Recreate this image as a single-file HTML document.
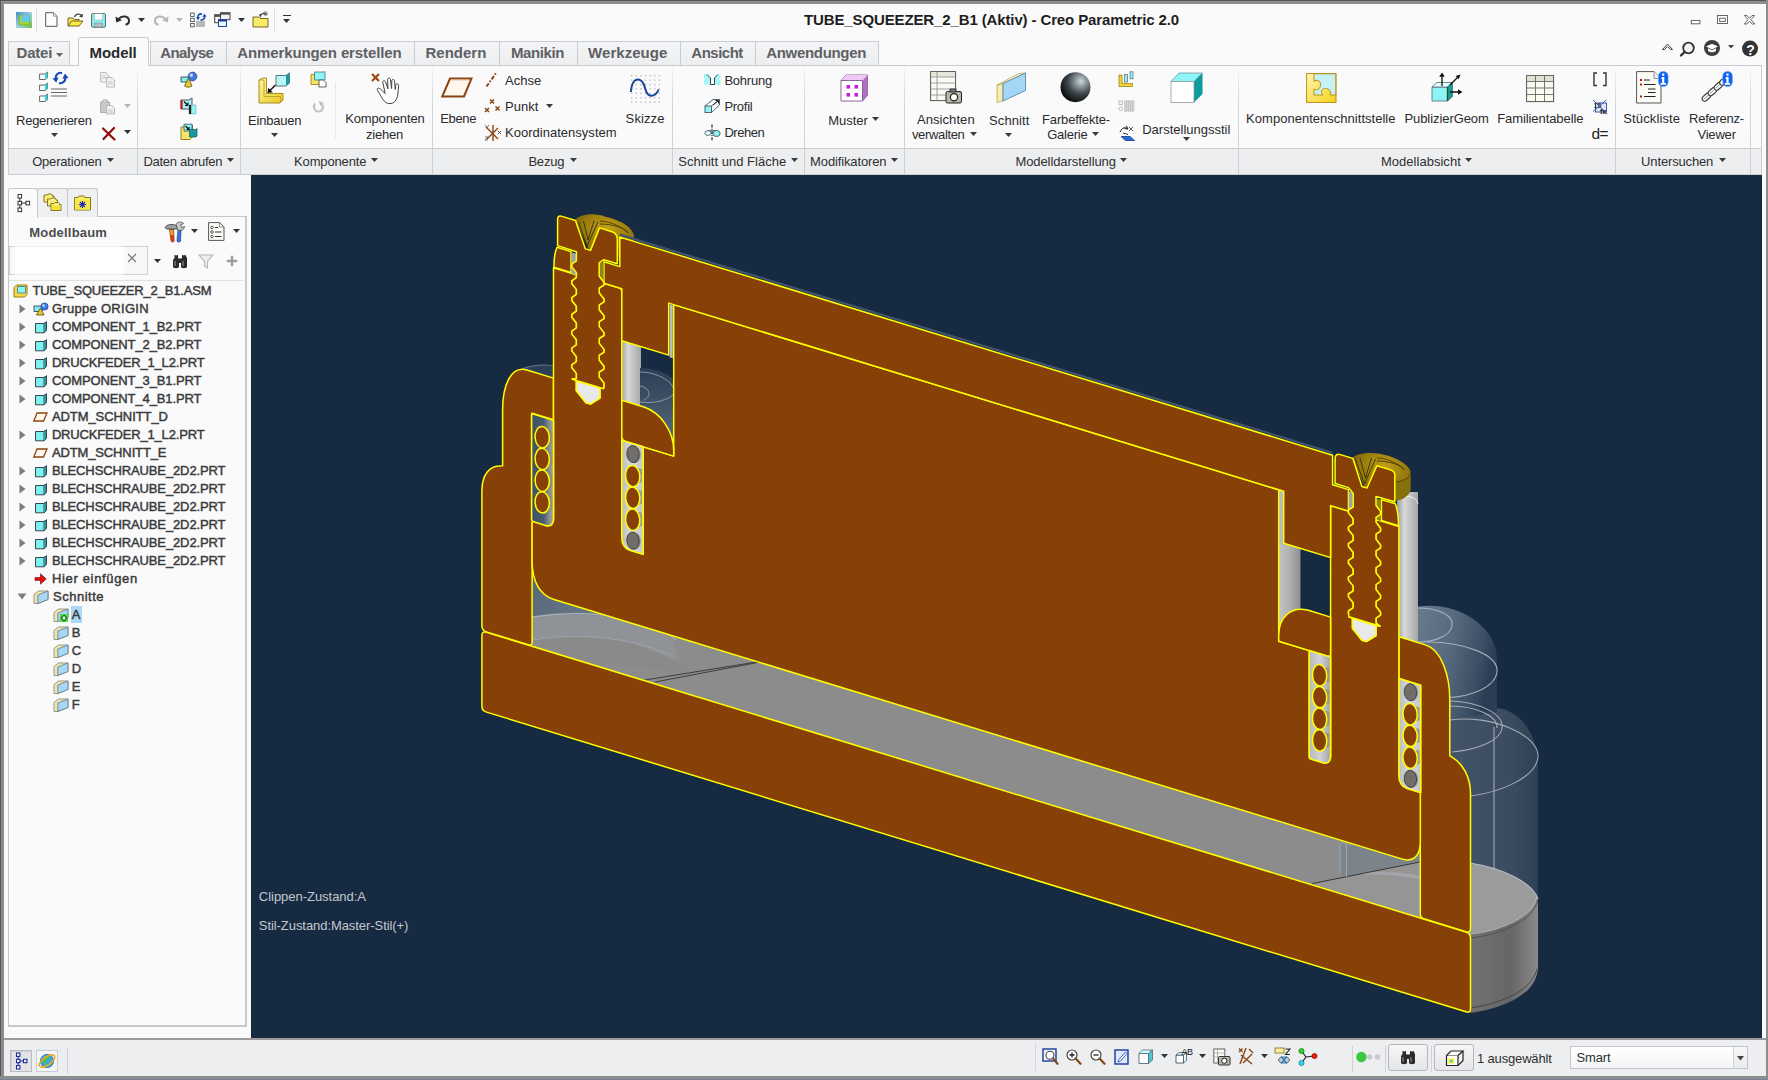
<!DOCTYPE html>
<html lang="de"><head><meta charset="utf-8"><title>TUBE_SQUEEZER_2_B1 (Aktiv) - Creo Parametric 2.0</title>
<style>
html,body{margin:0;padding:0;}
body{width:1768px;height:1080px;overflow:hidden;position:relative;background:#fafafb;font-family:"Liberation Sans",sans-serif;}
.t{position:absolute;white-space:nowrap;font-family:"Liberation Sans",sans-serif;}
svg{overflow:visible;}
.tr{-webkit-text-stroke:0.45px #3a3a3a;}
.g{-webkit-font-smoothing:antialiased;}
</style></head>
<body>
<div style="position:absolute;left:0px;top:0px;width:1768px;height:1080px;background:#8d8d8d;"></div>
<div style="position:absolute;left:0px;top:0px;width:1768px;height:1px;background:#555;"></div>
<div style="position:absolute;left:0px;top:0px;width:1px;height:1080px;background:#555;"></div>
<div style="position:absolute;left:4px;top:4px;width:1762px;height:1072px;background:#fafafb;"></div>
<div style="position:absolute;left:1766px;top:0px;width:2px;height:1080px;background:#8d8d8d;"></div>
<div style="position:absolute;left:0px;top:1076px;width:1768px;height:4px;background:#8d8d8d;"></div>
<div style="position:absolute;left:0px;top:1078.5px;width:1768px;height:1.5px;background:#76849a;"></div>
<div class="t " style="left:804.0px;top:11.8px;font-size:15px;line-height:15px;font-weight:bold;color:#1e1e1e;letter-spacing:-0.125px;">TUBE_SQUEEZER_2_B1 (Aktiv) - Creo Parametric 2.0</div>
<div style="position:absolute;left:8px;top:65px;width:1754px;height:1px;background:#c9ccd0;"></div>
<div style="position:absolute;left:8px;top:41px;width:62px;height:24px;background:linear-gradient(#f3f4f5,#eceef0);border:1px solid #c9ccd0;border-bottom:none;box-sizing:border-box;"></div>
<div class="t " style="left:16.5px;top:45.0px;font-size:15px;line-height:15px;font-weight:bold;color:#5e6064;letter-spacing:-0.197px;">Datei</div>
<svg style="position:absolute;left:54.5px;top:51.5px" width="9" height="6" viewBox="0 0 9 6" ><path d="M1 1 H8 L4.5 5 Z" fill="#666"/></svg>
<div style="position:absolute;left:150px;top:41px;width:77px;height:24px;background:linear-gradient(#f3f4f5,#eceef0);border:1px solid #c9ccd0;border-bottom:none;box-sizing:border-box;"></div>
<div class="t " style="left:160.3px;top:45.0px;font-size:15px;line-height:15px;font-weight:bold;color:#5e6064;letter-spacing:-0.650px;">Analyse</div>
<div style="position:absolute;left:226px;top:41px;width:189px;height:24px;background:linear-gradient(#f3f4f5,#eceef0);border:1px solid #c9ccd0;border-bottom:none;box-sizing:border-box;"></div>
<div class="t " style="left:237.2px;top:45.0px;font-size:15px;line-height:15px;font-weight:bold;color:#5e6064;letter-spacing:-0.110px;">Anmerkungen erstellen</div>
<div style="position:absolute;left:414px;top:41px;width:86px;height:24px;background:linear-gradient(#f3f4f5,#eceef0);border:1px solid #c9ccd0;border-bottom:none;box-sizing:border-box;"></div>
<div class="t " style="left:425.5px;top:45.0px;font-size:15px;line-height:15px;font-weight:bold;color:#5e6064;letter-spacing:-0.006px;">Rendern</div>
<div style="position:absolute;left:499px;top:41px;width:79px;height:24px;background:linear-gradient(#f3f4f5,#eceef0);border:1px solid #c9ccd0;border-bottom:none;box-sizing:border-box;"></div>
<div class="t " style="left:510.9px;top:45.0px;font-size:15px;line-height:15px;font-weight:bold;color:#5e6064;letter-spacing:-0.392px;">Manikin</div>
<div style="position:absolute;left:577px;top:41px;width:104px;height:24px;background:linear-gradient(#f3f4f5,#eceef0);border:1px solid #c9ccd0;border-bottom:none;box-sizing:border-box;"></div>
<div class="t " style="left:588.1px;top:45.0px;font-size:15px;line-height:15px;font-weight:bold;color:#5e6064;letter-spacing:0.031px;">Werkzeuge</div>
<div style="position:absolute;left:680px;top:41px;width:76px;height:24px;background:linear-gradient(#f3f4f5,#eceef0);border:1px solid #c9ccd0;border-bottom:none;box-sizing:border-box;"></div>
<div class="t " style="left:691.3px;top:45.0px;font-size:15px;line-height:15px;font-weight:bold;color:#5e6064;letter-spacing:-0.502px;">Ansicht</div>
<div style="position:absolute;left:755px;top:41px;width:124px;height:24px;background:linear-gradient(#f3f4f5,#eceef0);border:1px solid #c9ccd0;border-bottom:none;box-sizing:border-box;"></div>
<div class="t " style="left:766.2px;top:45.0px;font-size:15px;line-height:15px;font-weight:bold;color:#5e6064;letter-spacing:-0.312px;">Anwendungen</div>
<div style="position:absolute;left:78px;top:37px;width:71px;height:29px;background:#fafafb;border:1px solid #c9ccd0;border-bottom:none;border-radius:3px 3px 0 0;box-sizing:border-box;"></div>
<div class="t " style="left:89.6px;top:45.0px;font-size:15px;line-height:15px;font-weight:bold;color:#2a2a2a;letter-spacing:-0.067px;">Modell</div>
<div style="position:absolute;left:8px;top:66px;width:1754px;height:82px;background:#fafafb;border-left:1px solid #c9ccd0;border-right:1px solid #c9ccd0;box-sizing:border-box;"></div>
<div style="position:absolute;left:8px;top:148px;width:1754px;height:27px;background:#edeef0;border:1px solid #c9ccd0;box-sizing:border-box;"></div>
<div style="position:absolute;left:137px;top:68px;width:1px;height:106px;background:linear-gradient(#f3f4f5 0%,#d5d8db 30%,#c9ccd0 100%);"></div>
<div style="position:absolute;left:240px;top:68px;width:1px;height:106px;background:linear-gradient(#f3f4f5 0%,#d5d8db 30%,#c9ccd0 100%);"></div>
<div style="position:absolute;left:432px;top:68px;width:1px;height:106px;background:linear-gradient(#f3f4f5 0%,#d5d8db 30%,#c9ccd0 100%);"></div>
<div style="position:absolute;left:672px;top:68px;width:1px;height:106px;background:linear-gradient(#f3f4f5 0%,#d5d8db 30%,#c9ccd0 100%);"></div>
<div style="position:absolute;left:804px;top:68px;width:1px;height:106px;background:linear-gradient(#f3f4f5 0%,#d5d8db 30%,#c9ccd0 100%);"></div>
<div style="position:absolute;left:904px;top:68px;width:1px;height:106px;background:linear-gradient(#f3f4f5 0%,#d5d8db 30%,#c9ccd0 100%);"></div>
<div style="position:absolute;left:1238px;top:68px;width:1px;height:106px;background:linear-gradient(#f3f4f5 0%,#d5d8db 30%,#c9ccd0 100%);"></div>
<div style="position:absolute;left:1615px;top:68px;width:1px;height:106px;background:linear-gradient(#f3f4f5 0%,#d5d8db 30%,#c9ccd0 100%);"></div>
<div style="position:absolute;left:1750px;top:68px;width:1px;height:106px;background:linear-gradient(#f3f4f5 0%,#d5d8db 30%,#c9ccd0 100%);"></div>
<div style="position:absolute;left:335px;top:82px;width:1px;height:56px;background:#e6e7e9;"></div>
<div class="t " style="left:32.2px;top:155.0px;font-size:13px;line-height:13px;color:#2f2f2f;letter-spacing:-0.206px;">Operationen</div>
<svg style="position:absolute;left:105.5px;top:157.0px" width="9" height="6" viewBox="0 0 9 6" ><path d="M1 1 H8 L4.5 5 Z" fill="#3a3a3a"/></svg>
<div class="t " style="left:143.4px;top:155.0px;font-size:13px;line-height:13px;color:#2f2f2f;letter-spacing:-0.270px;">Daten abrufen</div>
<svg style="position:absolute;left:226.3px;top:157.0px" width="9" height="6" viewBox="0 0 9 6" ><path d="M1 1 H8 L4.5 5 Z" fill="#3a3a3a"/></svg>
<div class="t " style="left:294.0px;top:155.0px;font-size:13px;line-height:13px;color:#2f2f2f;letter-spacing:-0.133px;">Komponente</div>
<svg style="position:absolute;left:370.4px;top:157.0px" width="9" height="6" viewBox="0 0 9 6" ><path d="M1 1 H8 L4.5 5 Z" fill="#3a3a3a"/></svg>
<div class="t " style="left:528.4px;top:155.0px;font-size:13px;line-height:13px;color:#2f2f2f;letter-spacing:-0.195px;">Bezug</div>
<svg style="position:absolute;left:568.5px;top:157.0px" width="9" height="6" viewBox="0 0 9 6" ><path d="M1 1 H8 L4.5 5 Z" fill="#3a3a3a"/></svg>
<div class="t " style="left:678.2px;top:155.0px;font-size:13px;line-height:13px;color:#2f2f2f;letter-spacing:0.023px;">Schnitt und Fläche</div>
<svg style="position:absolute;left:790.3px;top:157.0px" width="9" height="6" viewBox="0 0 9 6" ><path d="M1 1 H8 L4.5 5 Z" fill="#3a3a3a"/></svg>
<div class="t " style="left:810.1px;top:155.0px;font-size:13px;line-height:13px;color:#2f2f2f;letter-spacing:-0.134px;">Modifikatoren</div>
<svg style="position:absolute;left:890.4px;top:157.0px" width="9" height="6" viewBox="0 0 9 6" ><path d="M1 1 H8 L4.5 5 Z" fill="#3a3a3a"/></svg>
<div class="t " style="left:1015.4px;top:155.0px;font-size:13px;line-height:13px;color:#2f2f2f;letter-spacing:-0.083px;">Modelldarstellung</div>
<svg style="position:absolute;left:1119.4px;top:157.0px" width="9" height="6" viewBox="0 0 9 6" ><path d="M1 1 H8 L4.5 5 Z" fill="#3a3a3a"/></svg>
<div class="t " style="left:1381.0px;top:155.0px;font-size:13px;line-height:13px;color:#2f2f2f;letter-spacing:0.023px;">Modellabsicht</div>
<svg style="position:absolute;left:1464.4px;top:157.0px" width="9" height="6" viewBox="0 0 9 6" ><path d="M1 1 H8 L4.5 5 Z" fill="#3a3a3a"/></svg>
<div class="t " style="left:1641.1px;top:155.0px;font-size:13px;line-height:13px;color:#2f2f2f;letter-spacing:-0.147px;">Untersuchen</div>
<svg style="position:absolute;left:1717.5px;top:157.0px" width="9" height="6" viewBox="0 0 9 6" ><path d="M1 1 H8 L4.5 5 Z" fill="#3a3a3a"/></svg>
<div class="t " style="left:16.1px;top:113.6px;font-size:13px;line-height:13px;color:#2b2b2b;letter-spacing:-0.273px;">Regenerieren</div>
<svg style="position:absolute;left:49.5px;top:131.7px" width="9" height="6" viewBox="0 0 9 6" ><path d="M1 1 H8 L4.5 5 Z" fill="#3a3a3a"/></svg>
<div class="t " style="left:248.1px;top:113.6px;font-size:13px;line-height:13px;color:#2b2b2b;letter-spacing:-0.207px;">Einbauen</div>
<svg style="position:absolute;left:270.3px;top:131.7px" width="9" height="6" viewBox="0 0 9 6" ><path d="M1 1 H8 L4.5 5 Z" fill="#3a3a3a"/></svg>
<div class="t " style="left:345.2px;top:111.9px;font-size:13px;line-height:13px;color:#2b2b2b;letter-spacing:-0.141px;">Komponenten</div>
<div class="t " style="left:365.9px;top:127.5px;font-size:13px;line-height:13px;color:#2b2b2b;letter-spacing:-0.169px;">ziehen</div>
<div class="t " style="left:440.2px;top:111.9px;font-size:13px;line-height:13px;color:#2b2b2b;letter-spacing:-0.319px;">Ebene</div>
<div class="t " style="left:505.1px;top:73.7px;font-size:13px;line-height:13px;color:#2b2b2b;letter-spacing:0.032px;">Achse</div>
<div class="t " style="left:505.1px;top:100.0px;font-size:13px;line-height:13px;color:#2b2b2b;letter-spacing:0.030px;">Punkt</div>
<svg style="position:absolute;left:545.4px;top:102.5px" width="9" height="6" viewBox="0 0 9 6" ><path d="M1 1 H8 L4.5 5 Z" fill="#3a3a3a"/></svg>
<div class="t " style="left:505.1px;top:126.3px;font-size:13px;line-height:13px;color:#2b2b2b;letter-spacing:0.013px;">Koordinatensystem</div>
<div class="t " style="left:625.6px;top:111.9px;font-size:13px;line-height:13px;color:#2b2b2b;letter-spacing:0.117px;">Skizze</div>
<div class="t " style="left:724.4px;top:73.7px;font-size:13px;line-height:13px;color:#2b2b2b;letter-spacing:-0.237px;">Bohrung</div>
<div class="t " style="left:724.4px;top:99.7px;font-size:13px;line-height:13px;color:#2b2b2b;letter-spacing:-0.271px;">Profil</div>
<div class="t " style="left:724.4px;top:126.3px;font-size:13px;line-height:13px;color:#2b2b2b;letter-spacing:-0.473px;">Drehen</div>
<div class="t " style="left:828.2px;top:113.6px;font-size:13px;line-height:13px;color:#2b2b2b;letter-spacing:-0.022px;">Muster</div>
<svg style="position:absolute;left:871.4px;top:115.9px" width="9" height="6" viewBox="0 0 9 6" ><path d="M1 1 H8 L4.5 5 Z" fill="#3a3a3a"/></svg>
<div class="t " style="left:917.0px;top:112.7px;font-size:13px;line-height:13px;color:#2b2b2b;letter-spacing:0.067px;">Ansichten</div>
<div class="t " style="left:911.9px;top:128.0px;font-size:13px;line-height:13px;color:#2b2b2b;letter-spacing:-0.338px;">verwalten</div>
<svg style="position:absolute;left:968.5px;top:130.8px" width="9" height="6" viewBox="0 0 9 6" ><path d="M1 1 H8 L4.5 5 Z" fill="#3a3a3a"/></svg>
<div class="t " style="left:989.1px;top:113.6px;font-size:13px;line-height:13px;color:#2b2b2b;letter-spacing:0.093px;">Schnitt</div>
<svg style="position:absolute;left:1004.4px;top:131.7px" width="9" height="6" viewBox="0 0 9 6" ><path d="M1 1 H8 L4.5 5 Z" fill="#3a3a3a"/></svg>
<div class="t " style="left:1042.1px;top:112.7px;font-size:13px;line-height:13px;color:#2b2b2b;letter-spacing:-0.172px;">Farbeffekte-</div>
<div class="t " style="left:1047.2px;top:128.0px;font-size:13px;line-height:13px;color:#2b2b2b;letter-spacing:-0.232px;">Galerie</div>
<svg style="position:absolute;left:1091.4px;top:130.8px" width="9" height="6" viewBox="0 0 9 6" ><path d="M1 1 H8 L4.5 5 Z" fill="#3a3a3a"/></svg>
<div class="t " style="left:1142.2px;top:122.9px;font-size:13px;line-height:13px;color:#2b2b2b;letter-spacing:0.003px;">Darstellungsstil</div>
<svg style="position:absolute;left:1181.5px;top:136.4px" width="9" height="6" viewBox="0 0 9 6" ><path d="M1 1 H8 L4.5 5 Z" fill="#3a3a3a"/></svg>
<div class="t " style="left:1246.1px;top:111.9px;font-size:13px;line-height:13px;color:#2b2b2b;letter-spacing:0.022px;">Komponentenschnittstelle</div>
<div class="t " style="left:1404.4px;top:111.9px;font-size:13px;line-height:13px;color:#2b2b2b;letter-spacing:-0.067px;">PublizierGeom</div>
<div class="t " style="left:1497.2px;top:111.9px;font-size:13px;line-height:13px;color:#2b2b2b;letter-spacing:-0.082px;">Familientabelle</div>
<div class="t " style="left:1623.3px;top:111.9px;font-size:13px;line-height:13px;color:#2b2b2b;letter-spacing:0.116px;">Stückliste</div>
<div class="t " style="left:1689.1px;top:111.9px;font-size:13px;line-height:13px;color:#2b2b2b;letter-spacing:-0.275px;">Referenz-</div>
<div class="t " style="left:1697.4px;top:127.5px;font-size:13px;line-height:13px;color:#2b2b2b;letter-spacing:-0.186px;">Viewer</div>
<div style="position:absolute;left:251px;top:175px;width:1511px;height:863px;background:#162a42;"></div>
<div style="position:absolute;left:8px;top:216px;width:239px;height:811px;background:#fafafb;border:2px solid #c4c8cc;border-left-width:1px;border-top-width:1px;box-sizing:border-box;"></div>
<div style="position:absolute;left:8px;top:188px;width:30px;height:30px;background:#fafafb;border:1px solid #c4c8cc;border-bottom:none;border-radius:3px 3px 0 0;box-sizing:border-box;"></div>
<div style="position:absolute;left:37px;top:188px;width:31px;height:29px;background:#eef0f1;border:1px solid #c4c8cc;border-bottom:none;border-radius:3px 3px 0 0;box-sizing:border-box;"></div>
<div style="position:absolute;left:67px;top:188px;width:31px;height:29px;background:#eef0f1;border:1px solid #c4c8cc;border-bottom:none;border-radius:3px 3px 0 0;box-sizing:border-box;"></div>
<div style="position:absolute;left:9px;top:216px;width:28px;height:3px;background:#fafafb;"></div>
<div class="t " style="left:29.3px;top:226.0px;font-size:13px;line-height:13px;font-weight:bold;color:#4a4c50;letter-spacing:0.196px;">Modellbaum</div>
<div style="position:absolute;left:9px;top:246px;width:139px;height:29px;background:#f7f8f8;border:1px solid #cdd0d3;box-sizing:border-box;"></div>
<div style="position:absolute;left:16px;top:248px;width:106px;height:25px;background:#fff;box-shadow:0 0 3px 2px #fff;"></div>
<div style="position:absolute;left:9px;top:279.5px;width:235px;height:1px;background:#dfe1e3;"></div>
<div style="position:absolute;left:4px;top:1038px;width:1762px;height:2px;background:#9a9a9a;"></div>
<div style="position:absolute;left:4px;top:1040px;width:1762px;height:36px;background:#edeeef;"></div>
<div style="position:absolute;left:1762px;top:175px;width:4px;height:863px;background:#fafafb;"></div>
<div style="position:absolute;left:10px;top:1050px;width:22px;height:22px;background:#e3e4e6;border:1px solid #b9bcc0;box-sizing:border-box;box-shadow:inset 1px 1px 1px #cfd1d4;"></div>
<div style="position:absolute;left:36px;top:1050px;width:22px;height:22px;background:#f4f5f6;border:1px solid #c9ccd0;box-sizing:border-box;"></div>
<div style="position:absolute;left:67px;top:1048px;width:1px;height:26px;background:#d0d2d5;"></div>
<div style="position:absolute;left:1035px;top:1043px;width:1px;height:28px;background:#d5d7da;"></div>
<div style="position:absolute;left:1352px;top:1046px;width:1px;height:26px;background:#d0d2d5;"></div>
<div style="position:absolute;left:1385px;top:1046px;width:1px;height:26px;background:#d0d2d5;"></div>
<div style="position:absolute;left:1431px;top:1046px;width:1px;height:26px;background:#d0d2d5;"></div>
<div style="position:absolute;left:1388px;top:1044px;width:40px;height:27px;background:linear-gradient(#f6f6f7,#e4e5e7);border:1px solid #b4b7bb;border-radius:3px;box-sizing:border-box;"></div>
<div style="position:absolute;left:1434px;top:1044px;width:40px;height:27px;background:linear-gradient(#f6f6f7,#e4e5e7);border:1px solid #b4b7bb;border-radius:3px;box-sizing:border-box;"></div>
<div class="t " style="left:1477.0px;top:1052.0px;font-size:13px;line-height:13px;color:#2f2f2f;letter-spacing:-0.160px;">1 ausgewählt</div>
<div style="position:absolute;left:1570px;top:1046px;width:178px;height:23px;background:linear-gradient(#fff,#f4f5f6);border:1px solid #c2c5c9;box-sizing:border-box;"></div>
<div style="position:absolute;left:1734px;top:1047px;width:13px;height:21px;background:linear-gradient(#f6f7f8,#e9ebed);"></div>
<div style="position:absolute;left:1733px;top:1047px;width:1px;height:21px;background:#cfd2d5;"></div>
<div class="t " style="left:1576.5px;top:1051.0px;font-size:13px;line-height:13px;color:#2f2f2f;letter-spacing:-0.134px;">Smart</div>
<svg style="position:absolute;left:1735.9px;top:1055.4px" width="9" height="6.4" viewBox="0 0 9 6.4" ><path d="M1 1 H8 L4.5 5.4 Z" fill="#444"/></svg>
<svg style="position:absolute;left:1354px;top:1050px" width="30" height="14" viewBox="0 0 30 14" ><circle cx="7.4" cy="7" r="5.2" fill="#3cc83c"/><circle cx="15.6" cy="7" r="2.8" fill="#c9cbce"/><circle cx="23.5" cy="7" r="2.8" fill="#c9cbce"/></svg>
<div class="t g" style="left:258.8px;top:890.0px;font-size:13px;line-height:13px;color:#c4c8cc;letter-spacing:-0.028px;">Clippen-Zustand:A</div>
<div class="t g" style="left:258.8px;top:919.0px;font-size:13px;line-height:13px;color:#c4c8cc;letter-spacing:-0.065px;">Stil-Zustand:Master-Stil(+)</div>
<svg style="position:absolute;left:16px;top:12px" width="16" height="16" viewBox="0 0 16 16" ><defs><linearGradient id="qa1" x1="0" y1="0" x2="1" y2="1"><stop offset="0" stop-color="#3c8fd8"/><stop offset="0.5" stop-color="#9fd0e8"/><stop offset="1" stop-color="#6cc04a"/></linearGradient></defs><rect x="0" y="0" width="16" height="16" fill="url(#qa1)"/><rect x="3" y="3" width="10.5" height="10" fill="#a6d52e" stroke="#6f9a1a" stroke-width="0.6"/><rect x="5.5" y="3" width="8" height="7" fill="#64c8ea"/></svg>
<div style="position:absolute;left:36px;top:8px;width:1px;height:24px;background:#dcdee0;"></div>
<svg style="position:absolute;left:45px;top:12px" width="13" height="15" viewBox="0 0 13 15" ><path d="M0.7 0.7 H8.5 L12 4.2 V14.3 H0.7 Z" fill="#fff" stroke="#555" stroke-width="1"/><path d="M8.5 0.7 V4.2 H12" fill="#e8e8e8" stroke="#777" stroke-width="0.7"/></svg>
<svg style="position:absolute;left:67px;top:12px" width="17" height="15" viewBox="0 0 17 15" ><path d="M1 14 L1 6 H6 L7.5 7.5 H12 V9" fill="#f7e46a" stroke="#6a5a10" stroke-width="0.9"/><path d="M1 14 L4.5 9 H16 L12 14 Z" fill="#fbe94c" stroke="#6a5a10" stroke-width="0.9"/><path d="M7.5 5 C8.5 1.5 13 1 14.8 4" fill="none" stroke="#333" stroke-width="1.2"/><path d="M15.8 1.8 L15.6 5.6 L12.2 4.6 Z" fill="#333"/></svg>
<svg style="position:absolute;left:91px;top:13px" width="15" height="15" viewBox="0 0 15 15" ><rect x="0.6" y="0.6" width="13.8" height="13.6" rx="1" fill="#8af3f5" stroke="#566" stroke-width="1"/><rect x="3.2" y="0.8" width="8.6" height="6.2" fill="#fff" stroke="#7aa" stroke-width="0.5"/><rect x="3.4" y="10" width="8" height="4" fill="#b9bcc0" stroke="#788" stroke-width="0.5"/></svg>
<svg style="position:absolute;left:115px;top:14px" width="17" height="12" viewBox="0 0 17 12" ><path d="M3.5 5.2 C7 0.8 13.5 2 14 6.5 C14.2 9 12.5 10.5 10.5 10.6" fill="none" stroke="#2e2e2e" stroke-width="2"/><path d="M0.5 2.5 L1.2 8.5 L7 6.3 Z" fill="#2e2e2e"/></svg>
<svg style="position:absolute;left:137.3px;top:16.5px" width="9" height="6" viewBox="0 0 9 6" ><path d="M1 1 H8 L4.5 5 Z" fill="#333"/></svg>
<svg style="position:absolute;left:152px;top:14px" width="17" height="12" viewBox="0 0 17 12" ><path d="M13.5 5.2 C10 0.8 3.5 2 3 6.5 C2.8 9 4.5 10.5 6.5 10.6" fill="none" stroke="#b4b6b9" stroke-width="2"/><path d="M16.5 2.5 L15.8 8.5 L10 6.3 Z" fill="#b4b6b9"/></svg>
<svg style="position:absolute;left:175.3px;top:16.5px" width="9" height="6" viewBox="0 0 9 6" ><path d="M1 1 H8 L4.5 5 Z" fill="#b4b6b9"/></svg>
<svg style="position:absolute;left:190px;top:12px" width="17" height="16" viewBox="0 0 17 16" ><g fill="#e8ffff" stroke="#444" stroke-width="0.8"><rect x="0.6" y="1" width="3.6" height="3.4"/><rect x="0.6" y="6.2" width="3.6" height="3.4"/><rect x="0.6" y="11.4" width="3.6" height="3.4"/></g><path d="M6 10 H15 M6 12 H15 M6 14 H15" stroke="#555" stroke-width="0.8"/><path d="M8 6.5 C7 3 10 1.2 12 2.2 M14.5 3.5 C15.5 7 12.5 8.5 10.5 7.8" fill="none" stroke="#1747b8" stroke-width="1.6"/><path d="M6 5.6 L8.2 8.2 L10 5 Z M16.4 4.6 L14.4 1.8 L12.4 5 Z" fill="#1747b8"/></svg>
<svg style="position:absolute;left:214px;top:12px" width="17" height="16" viewBox="0 0 17 16" ><rect x="0.7" y="2.7" width="9" height="8" fill="#f4f4f4" stroke="#444" stroke-width="1"/><rect x="0.7" y="2.7" width="9" height="2.2" fill="#555"/><rect x="6.5" y="0.7" width="9.5" height="7" fill="#f4f4f4" stroke="#444" stroke-width="1"/><rect x="6.5" y="0.7" width="9.5" height="2" fill="#555"/><rect x="4.5" y="7.5" width="8" height="7" fill="#dff" stroke="#2a3f9a" stroke-width="1"/><rect x="4.5" y="7.5" width="8" height="2" fill="#2a3f9a"/></svg>
<svg style="position:absolute;left:237.1px;top:16.5px" width="9" height="6" viewBox="0 0 9 6" ><path d="M1 1 H8 L4.5 5 Z" fill="#333"/></svg>
<svg style="position:absolute;left:252px;top:11px" width="18" height="17" viewBox="0 0 18 17" ><path d="M1 16 V6 H6.5 L8 7.5 H16 V16 Z" fill="#f8ec66" stroke="#6a5a10" stroke-width="0.9"/><path d="M8 5.5 C9 2 13 1.5 14.5 4" fill="none" stroke="#333" stroke-width="1.2"/><path d="M9.6 3 L7 3.4 L8.4 6.4 Z" fill="#333"/><path d="M12 1 h3 v3 h-3z" fill="none" stroke="#555" stroke-width="0.7"/></svg>
<div style="position:absolute;left:274px;top:8px;width:1px;height:24px;background:#dcdee0;"></div>
<div style="position:absolute;left:283px;top:15px;width:8px;height:1.3px;background:#333;"></div>
<svg style="position:absolute;left:282.3px;top:18.2px" width="9" height="6" viewBox="0 0 9 6" ><path d="M1 1 H8 L4.5 5 Z" fill="#333"/></svg>
<svg style="position:absolute;left:1690px;top:14px" width="68" height="12" viewBox="0 0 68 12" ><rect x="1.3" y="6.4" width="8.6" height="3.4" fill="#fff" stroke="#555" stroke-width="0.9"/><rect x="27.5" y="1.5" width="10" height="8" fill="#fff" stroke="#555" stroke-width="0.9"/><rect x="29.7" y="4.2" width="5.6" height="3.2" fill="#fff" stroke="#555" stroke-width="0.9"/><path d="M54.5 1.5 L57 1.5 L59.5 4.3 L62 1.5 L64.6 1.5 L61 5.7 L64.8 10 L62 10 L59.5 7.2 L57 10 L54.3 10 L58 5.7 Z" fill="#fff" stroke="#555" stroke-width="0.9"/></svg>
<svg style="position:absolute;left:1660px;top:39px" width="100" height="19" viewBox="0 0 100 19" ><path d="M2.5 10.5 L7.5 5 L12.5 10.5 L10.8 10.5 L7.5 7.6 L4.2 10.5 Z" fill="#fff" stroke="#444" stroke-width="1"/><circle cx="28.5" cy="9" r="5.3" fill="#eef6fb" stroke="#333" stroke-width="1.8"/><path d="M24.5 13 L21 16.5" stroke="#333" stroke-width="2.4" stroke-linecap="round"/><circle cx="52" cy="9" r="8" fill="#3c3c3c"/><path d="M46 7.5 L52 4.8 L58 7.5 L52 10.4 Z" fill="#fff"/><path d="M48 9.3 V12 C50 13.8 54 13.8 56 12 V9.3 L52 11.3 Z" fill="#fff"/><path d="M68 6 H74 L71 9.6 Z" fill="#444"/><circle cx="90" cy="9.6" r="8" fill="#333"/></svg>
<div class="t " style="left:1746.2px;top:43.1px;font-size:14px;line-height:14px;font-weight:bold;color:#fff;">?</div>
<svg style="position:absolute;left:39px;top:71px" width="30" height="32" viewBox="0 0 30 32" ><g fill="#f4ffff" stroke="#555" stroke-width="0.9"><path d="M0.6 3 H6 L8.5 1 V6.5 L6 8.5 H0.6 Z"/><path d="M0.6 14 H6 L8.5 12 V17.5 L6 19.5 H0.6 Z"/><path d="M0.6 25 H6 L8.5 23 V28.5 L6 30.5 H0.6 Z"/></g><g fill="#35d0d4"><path d="M6 3 L8.5 1 V6.5 L6 8.5Z"/><path d="M6 14 L8.5 12 V17.5 L6 19.5Z"/><path d="M6 25 L8.5 23 V28.5 L6 30.5Z"/></g><path d="M12 18 H28 M12 21.5 H28 M12 25 H28" stroke="#666" stroke-width="1"/><path d="M17 9 C15.5 4 19.5 0.8 23 2.2 M26 5.5 C27.5 10 23.5 13 20 12" fill="none" stroke="#1747b8" stroke-width="2"/><path d="M13.5 7.5 L17.2 11.5 L19.6 6.4 Z M29.6 7 L26 2.6 L23.4 7.8 Z" fill="#1747b8"/></svg>
<svg style="position:absolute;left:100px;top:72px" width="16" height="16" viewBox="0 0 16 16" ><g fill="#f2f2f2" stroke="#aeb1b5" stroke-width="0.9"><path d="M0.6 0.6 H6 L8.5 3 V10 H0.6 Z"/><path d="M6.6 5.6 H12 L14.5 8 V15 H6.6 Z"/></g><path d="M2 4 H6 M2 6 H7 M8 10 H13 M8 12 H13" stroke="#aeb1b5" stroke-width="0.7"/></svg>
<svg style="position:absolute;left:100px;top:99px" width="16" height="16" viewBox="0 0 16 16" ><path d="M0.6 3 H9.5 V13.5 H0.6 Z" fill="#c8cacc" stroke="#a2a5a9" stroke-width="0.9"/><path d="M3 3 V1 H7.2 V3" fill="#ddd" stroke="#a2a5a9" stroke-width="0.9"/><path d="M6.6 6.6 H12 L14.5 9 V15 H6.6 Z" fill="#f2f2f2" stroke="#aeb1b5" stroke-width="0.9"/><path d="M8 11 H13 M8 13 H13" stroke="#aeb1b5" stroke-width="0.7"/></svg>
<svg style="position:absolute;left:122.5px;top:102.5px" width="9" height="6" viewBox="0 0 9 6" ><path d="M1 1 H8 L4.5 5 Z" fill="#b4b6b9"/></svg>
<svg style="position:absolute;left:102px;top:127px" width="15" height="14" viewBox="0 0 15 14" ><path d="M1 1.5 L12.5 12.5 M12 1 L1.5 12" stroke="#8d0a0a" stroke-width="2.2" stroke-linecap="round"/></svg>
<svg style="position:absolute;left:122.5px;top:129.0px" width="9" height="6" viewBox="0 0 9 6" ><path d="M1 1 H8 L4.5 5 Z" fill="#333"/></svg>
<svg style="position:absolute;left:180px;top:71px" width="18" height="17" viewBox="0 0 18 17" ><path d="M1 6 H8 L10.5 3.8 V9 L8 11 H1 Z" fill="#7ff0f0" stroke="#3c4650" stroke-width="0.9"/><circle cx="12.5" cy="5.5" r="4.4" fill="#3e7be0" stroke="#1d3f94" stroke-width="0.7"/><circle cx="11.4" cy="4.2" r="1.6" fill="#cfe0ff"/><path d="M8.5 7 L12 15 C10 16.5 6.5 16.5 4.5 15 Z" fill="#e8c83a" stroke="#6a5a10" stroke-width="0.9"/></svg>
<svg style="position:absolute;left:180px;top:97px" width="18" height="18" viewBox="0 0 18 18" ><path d="M1 3 H9 L12 1 V10 L9 12 H1 Z" fill="#a8f4f4" stroke="#3c4650" stroke-width="0.9"/><rect x="0.6" y="3" width="2" height="9" fill="#d01010"/><path d="M9 8 H16 V17 H9 Z" fill="#8ff4f6" stroke="#7aa" stroke-width="0.6"/><rect x="9" y="8" width="2.2" height="9" fill="#222"/><path d="M4 4.5 L8 8.5 M8 8.5 V5.5 M8 8.5 H5" stroke="#111" stroke-width="1.2" fill="none"/></svg>
<svg style="position:absolute;left:180px;top:123px" width="18" height="18" viewBox="0 0 18 18" ><path d="M1 4 H10 L12.5 2 V14 L10 16.5 H1 Z" fill="#f6e56a" stroke="#8a7410" stroke-width="0.9"/><path d="M4 1.2 H12 V8 H4 Z" fill="#8ff4f6" stroke="#3c4650" stroke-width="0.8"/><path d="M9.5 6.5 H16 L17 5.5 V13 L16 14 H9.5 Z" fill="#1a9aa0" stroke="#0d5a60" stroke-width="0.7"/><path d="M5.5 3 L9 6.5 M9 6.5 V4 M9 6.5 H6.5" stroke="#111" stroke-width="1.2" fill="none"/></svg>
<svg style="position:absolute;left:258px;top:72px" width="33" height="33" viewBox="0 0 33 33" ><defs><linearGradient id="ein1" x1="0" y1="0" x2="1" y2="1"><stop offset="0" stop-color="#fff6a0"/><stop offset="1" stop-color="#e9c81e"/></linearGradient></defs><path d="M1 8 L4.5 6 H8.5 V21.5 H25 V28 L22 31 H1 Z" fill="url(#ein1)" stroke="#a08410" stroke-width="0.9"/><path d="M1 8 H6 V24.5 H22.5 V31" fill="none" stroke="#b89a18" stroke-width="0.8"/><path d="M18 3.5 H28 L31.5 0.8 V11 L28 14 H18 Z" fill="#b9f6f6" stroke="#4a6a70" stroke-width="0.9"/><path d="M28 3.5 L31.5 0.8 V11 L28 14 Z" fill="#1a9aa0"/><path d="M17.5 13 L10.5 20" stroke="#111" stroke-width="1.4"/><path d="M9.5 21 L10.2 15.8 L14.8 20.3 Z" fill="#111"/></svg>
<svg style="position:absolute;left:310px;top:71px" width="17" height="17" viewBox="0 0 17 17" ><path d="M1 3.5 H10 L12.5 1 V11 L10 13.5 H1 Z" fill="#f6e56a" stroke="#a08410" stroke-width="0.9"/><path d="M4.5 1 H13.5 L15 0.6 V9 H4.5 Z" fill="#8ff4f6" stroke="#3c7a80" stroke-width="0.8"/><path d="M9 9 H13.5 L16 11.5 V16 H9 Z" fill="#fff" stroke="#555" stroke-width="0.9"/></svg>
<svg style="position:absolute;left:312px;top:100px" width="13" height="13" viewBox="0 0 13 13" ><path d="M3.2 3.5 C0.5 6.5 2.5 11.5 6.5 11.5 C10.5 11.5 12.5 6.5 9.5 3.5" fill="none" stroke="#c2c4c7" stroke-width="2.2"/><path d="M6.8 0.5 L11.8 3 L8.2 6.2 Z" fill="#c2c4c7"/></svg>
<svg style="position:absolute;left:370px;top:72px" width="31" height="33" viewBox="0 0 31 33" ><path d="M2 2 L9 9 M9 2 L2 9" stroke="#9a4a12" stroke-width="2.2"/><path d="M10.5 17 C8.5 15.5 6.5 16 7.5 18.5 L13 27.5 C14.5 30 17 32 21 31.5 C25.5 31 27.5 26 28 21 L28.6 13.5 C28.7 11.5 26 11.2 25.8 13.2 L25.2 17.5 L24.6 9 C24.5 7 21.8 7 21.8 9 L21.6 16.5 L20.4 7.4 C20.2 5.4 17.5 5.8 17.6 7.8 L18 16.8 L15.4 9.6 C14.7 7.8 12.2 8.6 12.8 10.6 L15.2 21.5 Z" fill="#fff" stroke="#444" stroke-width="1"/></svg>
<svg style="position:absolute;left:441px;top:77px" width="32" height="21" viewBox="0 0 32 21" ><path d="M9 1.5 H30.5 L23 19.5 H1.2 Z" fill="#fff7ec" stroke="#8a4513" stroke-width="2"/><path d="M9.5 3 H28" stroke="#d8b890" stroke-width="0.8"/></svg>
<svg style="position:absolute;left:485px;top:71px" width="14" height="17" viewBox="0 0 14 17" ><path d="M1.5 15.5 L11.5 1.5" stroke="#8a4513" stroke-width="2" stroke-dasharray="4 1.6 1.6 1.6"/></svg>
<svg style="position:absolute;left:484px;top:98px" width="17" height="16" viewBox="0 0 17 16" ><g stroke="#8a4513" stroke-width="1.5"><path d="M6 1.5 L10 5.5 M10 1.5 L6 5.5"/><path d="M1 10 L5 14 M5 10 L1 14"/><path d="M11.5 8.5 L15.5 12.5 M15.5 8.5 L11.5 12.5"/></g></svg>
<svg style="position:absolute;left:484px;top:124px" width="18" height="18" viewBox="0 0 18 18" ><g stroke="#8a4513" stroke-width="1.4"><path d="M9 1 V17 M2 3 L14 15 M14 4 L3 15"/></g><path d="M14 7 L17 10 M17 7 L14 10" stroke="#555" stroke-width="1"/><path d="M1 1 L3 3.5 L5 1 M1 13 H4 L1 16 H4" stroke="#555" stroke-width="0.8" fill="none"/></svg>
<svg style="position:absolute;left:630px;top:74px" width="30" height="28" viewBox="0 0 30 28" ><g fill="#b9bec4"><rect x="1.0" y="1.0" width="1.4" height="1.4"/><rect x="1.0" y="5.4" width="1.4" height="1.4"/><rect x="1.0" y="9.8" width="1.4" height="1.4"/><rect x="1.0" y="14.2" width="1.4" height="1.4"/><rect x="1.0" y="18.6" width="1.4" height="1.4"/><rect x="1.0" y="23.0" width="1.4" height="1.4"/><rect x="1.0" y="27.4" width="1.4" height="1.4"/><rect x="5.6" y="1.0" width="1.4" height="1.4"/><rect x="5.6" y="5.4" width="1.4" height="1.4"/><rect x="5.6" y="9.8" width="1.4" height="1.4"/><rect x="5.6" y="14.2" width="1.4" height="1.4"/><rect x="5.6" y="18.6" width="1.4" height="1.4"/><rect x="5.6" y="23.0" width="1.4" height="1.4"/><rect x="5.6" y="27.4" width="1.4" height="1.4"/><rect x="10.2" y="1.0" width="1.4" height="1.4"/><rect x="10.2" y="5.4" width="1.4" height="1.4"/><rect x="10.2" y="9.8" width="1.4" height="1.4"/><rect x="10.2" y="14.2" width="1.4" height="1.4"/><rect x="10.2" y="18.6" width="1.4" height="1.4"/><rect x="10.2" y="23.0" width="1.4" height="1.4"/><rect x="10.2" y="27.4" width="1.4" height="1.4"/><rect x="14.8" y="1.0" width="1.4" height="1.4"/><rect x="14.8" y="5.4" width="1.4" height="1.4"/><rect x="14.8" y="9.8" width="1.4" height="1.4"/><rect x="14.8" y="14.2" width="1.4" height="1.4"/><rect x="14.8" y="18.6" width="1.4" height="1.4"/><rect x="14.8" y="23.0" width="1.4" height="1.4"/><rect x="14.8" y="27.4" width="1.4" height="1.4"/><rect x="19.4" y="1.0" width="1.4" height="1.4"/><rect x="19.4" y="5.4" width="1.4" height="1.4"/><rect x="19.4" y="9.8" width="1.4" height="1.4"/><rect x="19.4" y="14.2" width="1.4" height="1.4"/><rect x="19.4" y="18.6" width="1.4" height="1.4"/><rect x="19.4" y="23.0" width="1.4" height="1.4"/><rect x="19.4" y="27.4" width="1.4" height="1.4"/><rect x="24.0" y="1.0" width="1.4" height="1.4"/><rect x="24.0" y="5.4" width="1.4" height="1.4"/><rect x="24.0" y="9.8" width="1.4" height="1.4"/><rect x="24.0" y="14.2" width="1.4" height="1.4"/><rect x="24.0" y="18.6" width="1.4" height="1.4"/><rect x="24.0" y="23.0" width="1.4" height="1.4"/><rect x="24.0" y="27.4" width="1.4" height="1.4"/><rect x="28.6" y="1.0" width="1.4" height="1.4"/><rect x="28.6" y="5.4" width="1.4" height="1.4"/><rect x="28.6" y="9.8" width="1.4" height="1.4"/><rect x="28.6" y="14.2" width="1.4" height="1.4"/><rect x="28.6" y="18.6" width="1.4" height="1.4"/><rect x="28.6" y="23.0" width="1.4" height="1.4"/><rect x="28.6" y="27.4" width="1.4" height="1.4"/></g><path d="M0.8 18 C2 2 12 2 15 14 C18 26 26 22 28.6 15.5" fill="none" stroke="#16469a" stroke-width="2"/></svg>
<svg style="position:absolute;left:704px;top:72px" width="17" height="15" viewBox="0 0 17 15" ><rect x="0" y="2" width="16.5" height="11" fill="#9ff4f6"/><path d="M0 13 L4 9 M3 13 L8 8 M10 13 L16 7 M0 8 L5 3 M12 6 L16 2" stroke="#dff" stroke-width="1"/><path d="M3 2.5 L6.5 6 V12.5 H10.5 V6 L14 2.5" fill="#fff" stroke="#344" stroke-width="1"/></svg>
<svg style="position:absolute;left:704px;top:98px" width="17" height="16" viewBox="0 0 17 16" ><rect x="1" y="8" width="6.5" height="6.5" fill="#8ff4f6" stroke="#456" stroke-width="0.9"/><path d="M1 8 L9 1.5 H15.5 M7.5 8 L15.5 1.5 V7 L7.5 14.5" fill="none" stroke="#456" stroke-width="0.9"/><path d="M9 7 L14.5 2.5 M14.5 2.5 H11.5 M14.5 2.5 V5.5" stroke="#222" stroke-width="1" fill="none"/></svg>
<svg style="position:absolute;left:704px;top:124px" width="17" height="17" viewBox="0 0 17 17" ><ellipse cx="4" cy="9" rx="3.2" ry="2.4" fill="#dff" stroke="#567" stroke-width="0.9"/><ellipse cx="12.5" cy="9.5" rx="3.6" ry="3" fill="#8ff4f6" stroke="#456" stroke-width="0.9"/><path d="M8 0.5 V16.5" stroke="#111" stroke-width="1.1" stroke-dasharray="3 1.2 1 1.2"/><path d="M4 6.6 L12.5 6.5" stroke="#456" stroke-width="0.8"/></svg>
<svg style="position:absolute;left:840px;top:74px" width="29" height="28" viewBox="0 0 29 28" ><path d="M1 6.5 L6 1 H27.5 V21.5 L22.5 27 H1 Z" fill="#fff" stroke="#7a5a90" stroke-width="0.9"/><path d="M1 6.5 L6 1 H27.5 L22.5 6.5 Z" fill="#efc8f6"/><path d="M22.5 6.5 L27.5 1 V21.5 L22.5 27 Z" fill="#b070c4"/><path d="M1 6.5 H22.5 V27" fill="none" stroke="#7a5a90" stroke-width="0.9"/><g fill="#c020d8"><rect x="6.5" y="11" width="3.6" height="3.6"/><rect x="14.5" y="11" width="3.6" height="3.6"/><rect x="6.5" y="19" width="3.6" height="3.6"/><rect x="14.5" y="19" width="3.6" height="3.6"/></g></svg>
<svg style="position:absolute;left:930px;top:71px" width="33" height="34" viewBox="0 0 33 34" ><rect x="0.6" y="0.6" width="25" height="29" fill="#fbfbf6" stroke="#555" stroke-width="1"/><rect x="1" y="1" width="24" height="5" fill="#e6e6da"/><path d="M0.6 6 H25.6 M0.6 12 H25.6 M0.6 18 H25.6 M0.6 24 H25.6 M7 0.6 V29.6" stroke="#8a8a8a" stroke-width="0.8"/><rect x="16" y="20.5" width="15.5" height="11.5" rx="1.5" fill="#b9b7a8" stroke="#222" stroke-width="1"/><rect x="20" y="18" width="6" height="3" fill="#777" stroke="#222" stroke-width="0.8"/><circle cx="24" cy="26.3" r="3.6" fill="#fff" stroke="#222" stroke-width="1.2"/></svg>
<svg style="position:absolute;left:996px;top:72px" width="31" height="31" viewBox="0 0 31 31" ><path d="M1 13 L7 11.5 V29 L1 30.5 Z" fill="#f6ecae" stroke="#b9a860" stroke-width="0.8"/><path d="M1 13 L23 1.5 L29.5 1 L7 11.5 Z" fill="#fbf5c8" stroke="#b9a860" stroke-width="0.8"/><path d="M7 11.5 L29.5 1 V18.5 L7 29 Z" fill="#a6d6f6" stroke="#5a86a8" stroke-width="0.9"/></svg>
<svg style="position:absolute;left:1060px;top:72px" width="32" height="31" viewBox="0 0 32 31" ><defs><radialGradient id="sph" cx="0.68" cy="0.3" r="0.75"><stop offset="0" stop-color="#cfd8dc"/><stop offset="0.25" stop-color="#8a979c"/><stop offset="0.6" stop-color="#3a4145"/><stop offset="1" stop-color="#0c0c0c"/></radialGradient></defs><circle cx="15.5" cy="15.2" r="15" fill="url(#sph)"/></svg>
<svg style="position:absolute;left:1118px;top:71px" width="17" height="17" viewBox="0 0 17 17" ><path d="M1 4 H4 V12.5 H14.5 V15.5 H1 Z" fill="#f2d23a" stroke="#a08410" stroke-width="0.8"/><rect x="6.5" y="3.5" width="3" height="7.5" fill="#8ff4f6" stroke="#567" stroke-width="0.7"/><rect x="12" y="0.8" width="3" height="7" fill="#8ff4f6" stroke="#567" stroke-width="0.7"/></svg>
<svg style="position:absolute;left:1118px;top:100px" width="17" height="12" viewBox="0 0 17 12" ><g fill="none" stroke="#b4b6b9" stroke-width="0.9"><rect x="1" y="1" width="3.4" height="3.4"/><circle cx="2.7" cy="8.7" r="1.8"/></g><rect x="6.5" y="0.8" width="9.5" height="10.4" fill="#d6d7d9" stroke="#c2c4c7" stroke-width="0.7"/><path d="M8.5 1 V11 M10.5 1 V11 M12.5 1 V11 M14.5 1 V11" stroke="#bbbdc0" stroke-width="0.8"/></svg>
<svg style="position:absolute;left:1118px;top:124px" width="18" height="18" viewBox="0 0 18 18" ><path d="M3 12.5 H12 L16.5 16.5 H7.5 Z" fill="#2a6ad8" stroke="#123a8a" stroke-width="0.8"/><path d="M2 8 C4 3 8 3 10 5 M10 5 L6.5 4.6 M10 5 L8.4 1.8" stroke="#222" stroke-width="1" fill="none"/><path d="M11 3 L15 7 M15 3 L11 7" stroke="#444" stroke-width="0.9"/><path d="M5 9 L10 10.5" stroke="#222" stroke-width="0.9"/></svg>
<svg style="position:absolute;left:1170px;top:72px" width="34" height="32" viewBox="0 0 34 32" ><path d="M1 9.5 L9 1 H32.5 L24 9.5 Z" fill="#8ff6f8" stroke="#6a8a90" stroke-width="0.7"/><path d="M24 9.5 L32.5 1 V22 L24 30.5 Z" fill="#0f9a9e"/><rect x="1" y="9.5" width="23" height="21" fill="#fff" stroke="#8a9aa0" stroke-width="0.8"/></svg>
<svg style="position:absolute;left:1306px;top:73px" width="31" height="30" viewBox="0 0 31 30" ><defs><linearGradient id="pz" x1="0" y1="0" x2="1" y2="1"><stop offset="0" stop-color="#fdf6b0"/><stop offset="1" stop-color="#f5d31c"/></linearGradient></defs><rect x="0.6" y="0.6" width="29.4" height="28.8" fill="url(#pz)" stroke="#b8860b" stroke-width="0.9"/><path d="M8 0.8 H29.8 V22 H24 C26.5 17 21 15 18.5 15.5 C15 16 14.5 20 17 22 H8 V16 C12 18.5 15 14.5 14.5 11 C14 7.5 10.5 6 8 8.5 Z" fill="#c4f2f6" stroke="#b8860b" stroke-width="0.9"/></svg>
<svg style="position:absolute;left:1431px;top:72px" width="32" height="30" viewBox="0 0 32 30" ><path d="M1 15 H16.5 V29 H1 Z" fill="#8ff4f6" stroke="#567" stroke-width="0.8"/><path d="M1 15 L6 10.5 H21.5 L16.5 15 Z" fill="#e6ffff" stroke="#567" stroke-width="0.8"/><path d="M16.5 15 L21.5 10.5 V24.5 L16.5 29 Z" fill="#1a9aa0" stroke="#0d5a60" stroke-width="0.6"/><path d="M16.5 15 V29" stroke="#1a5a10" stroke-width="1.4"/><path d="M11 14 V3 M19 13 L27 5 M19 20 H29" stroke="#111" stroke-width="1.3"/><path d="M11 0.5 L13.8 4.8 H8.2 Z M29.5 2.5 L27.8 7.3 L24.6 4 Z M31.5 20 L27 22.8 V17.2 Z" fill="#111"/></svg>
<svg style="position:absolute;left:1526px;top:75px" width="28" height="27" viewBox="0 0 28 27" ><rect x="0.6" y="0.6" width="27" height="26" fill="#fbfbf0" stroke="#555" stroke-width="1"/><rect x="1" y="1" width="26" height="5" fill="#e2e2d4"/><path d="M0.6 6.5 H27.6 M0.6 13 H27.6 M0.6 19.5 H27.6 M9.5 0.6 V26.6 M18.5 0.6 V26.6" stroke="#666" stroke-width="0.9"/></svg>
<svg style="position:absolute;left:1592px;top:72px" width="16" height="15" viewBox="0 0 16 15" ><path d="M5 1 H2 V13.5 H5 M11 1 H14 V13.5 H11" fill="none" stroke="#333" stroke-width="1.4"/></svg>
<svg style="position:absolute;left:1592px;top:99px" width="16" height="16" viewBox="0 0 16 16" ><rect x="3.5" y="4" width="11" height="9" fill="#dfe8fb" stroke="#2a4aa8" stroke-width="0.9"/><path d="M1 1 L15.5 15 M1 12.5 L14.5 0.8" stroke="#2a4aa8" stroke-width="0.9"/></svg>
<div class="t " style="left:1593.6px;top:101.6px;font-size:7px;line-height:7px;color:#111;">15</div>
<div class="t " style="left:1600.0px;top:107.6px;font-size:7px;line-height:7px;font-weight:bold;color:#111;">fx</div>
<div class="t " style="left:1591.5px;top:125.9px;font-size:15.5px;line-height:15.5px;color:#222;letter-spacing:-0.594px;">d=</div>
<svg style="position:absolute;left:1636px;top:71px" width="35" height="34" viewBox="0 0 35 34" ><path d="M0.6 0.6 H18 L25 7.5 V32 H0.6 Z" fill="#fcfcf6" stroke="#555" stroke-width="1"/><path d="M18 0.6 V7.5 H25" fill="#eee" stroke="#777" stroke-width="0.8"/><g fill="#d01010"><rect x="4" y="8" width="2" height="2"/><rect x="4" y="12.5" width="2" height="2"/><rect x="4" y="24.5" width="2" height="2"/></g><path d="M8 9 H14 M8 13.5 H19.5 M12 18 H19.5 M12 21.5 H19.5 M8 25.5 H19.5" stroke="#222" stroke-width="1.2"/><rect x="22.5" y="0.5" width="9.6" height="15" rx="4.4" fill="#0a63ea" stroke="#6aa6ff" stroke-width="0.6"/><path d="M26.1 5.9 h2.2 v6 h1.6 v1.8 h-5.4 v-1.8 h1.6 v-4.2 h-1.4 z M26.1 2.5 h2.2 v2.2 h-2.2 z" fill="#fff"/></svg>
<svg style="position:absolute;left:1700px;top:71px" width="36" height="34" viewBox="0 0 36 34" ><g fill="#fff" stroke="#3a3a3a" stroke-width="1.2"><rect x="-5" y="-2.6" width="10" height="5.2" rx="2.6" transform="translate(6.5 26) rotate(-42)"/><rect x="-5" y="-2.6" width="10" height="5.2" rx="2.6" transform="translate(12.5 20.5) rotate(-42)"/><rect x="-5" y="-2.6" width="10" height="5.2" rx="2.6" transform="translate(18.5 15) rotate(-42)"/><rect x="-5" y="-2.6" width="10" height="5.2" rx="2.6" transform="translate(24 10) rotate(-42)"/></g><path d="M4 28 L9 23.5 M10 22.5 L15 18 M16 17 L21 12.5" stroke="#777" stroke-width="0.8"/><rect x="22.8" y="0.5" width="9.6" height="15" rx="4.4" fill="#0a63ea" stroke="#6aa6ff" stroke-width="0.6"/><path d="M26.400000000000002 5.9 h2.2 v6 h1.6 v1.8 h-5.4 v-1.8 h1.6 v-4.2 h-1.4 z M26.400000000000002 2.5 h2.2 v2.2 h-2.2 z" fill="#fff"/></svg>
<svg style="position:absolute;left:14px;top:193px" width="20" height="20" viewBox="0 0 20 20" ><g fill="#fff" stroke="#333" stroke-width="1"><rect x="4" y="1.5" width="3.6" height="3.6"/><rect x="4" y="8.3" width="3.6" height="3.6"/><rect x="4" y="15" width="3.6" height="3.6"/><rect x="12" y="8.3" width="3.6" height="3.6"/></g><path d="M5.8 5 V8.3 M5.8 12 V15 M7.6 10.1 H12" stroke="#333" stroke-width="1"/></svg>
<svg style="position:absolute;left:43px;top:193px" width="20" height="19" viewBox="0 0 20 19" ><g fill="#f8ee7a" stroke="#7a6a10" stroke-width="0.9"><path d="M1 9 V2 H4 L5 1 H8.5 L9.5 2 V3 H11 V9 Z"/><path d="M4.5 13 V6 H7.5 L8.5 5 H12 L13 6 V7 H14.5 V13 Z"/><path d="M8 17.5 V10.5 H11 L12 9.5 H15.5 L16.5 10.5 V11.5 H18 V17.5 Z"/></g><rect x="8.6" y="12.6" width="8.8" height="4.4" fill="#f5e23c"/></svg>
<svg style="position:absolute;left:74px;top:195px" width="18" height="16" viewBox="0 0 18 16" ><path d="M0.6 15 V2.5 H4 L5 1 H10 L11 2.5 H16.5 V15 Z" fill="#f8ee6a" stroke="#7a6a10" stroke-width="0.9"/><rect x="1.2" y="4.5" width="14.8" height="10" fill="#f7e84a"/><path d="M8.5 6 V13 M5 9.5 H12 M6 7 L11 12 M11 7 L6 12" stroke="#1a28c8" stroke-width="1.1"/></svg>
<svg style="position:absolute;left:164px;top:221px" width="22" height="22" viewBox="0 0 22 22" ><path d="M5.5 8 L7 20 C7.5 21.5 10 21.5 10.2 20 L9.5 8 Z" fill="#f0a030" stroke="#7a3a10" stroke-width="0.7"/><path d="M6.6 14 L7.2 20 C8 21 9.6 21 10 20 L9.8 14 Z" fill="#d83a1a"/><path d="M1 6.5 C3 3 9 2.5 13 5 L13.5 8 H2.5 Z" fill="#9aa0a6" stroke="#333" stroke-width="0.8"/><path d="M14 9 L13 20 C13.5 21.5 16 21.5 16.5 20 L17 9 Z" fill="#3a7ad8" stroke="#123a8a" stroke-width="0.7"/><path d="M12 3.5 C13 0.5 17.5 0.5 19.5 2.5 L16.5 4 L17.5 6.5 L20.5 5.5 C20.5 9 16 10.5 13.5 8.5 Z" fill="#c8ccd0" stroke="#444" stroke-width="0.8"/></svg>
<svg style="position:absolute;left:190.0px;top:228.0px" width="9" height="6" viewBox="0 0 9 6" ><path d="M1 1 H8 L4.5 5 Z" fill="#333"/></svg>
<svg style="position:absolute;left:208px;top:222px" width="17" height="19" viewBox="0 0 17 19" ><path d="M0.6 0.6 H11.5 L16 5 V18.4 H0.6 Z" fill="#fcfcf6" stroke="#555" stroke-width="1"/><path d="M11.5 0.6 V5 H16" fill="none" stroke="#777" stroke-width="0.8"/><g fill="none" stroke="#333" stroke-width="0.8"><circle cx="4" cy="5.5" r="1.3"/><circle cx="4" cy="10" r="1.3"/><circle cx="4" cy="14.5" r="1.3"/></g><path d="M7 5.5 H10 M7 10 H13.5 M7 14.5 H13.5" stroke="#333" stroke-width="1"/></svg>
<svg style="position:absolute;left:232.0px;top:228.0px" width="9" height="6" viewBox="0 0 9 6" ><path d="M1 1 H8 L4.5 5 Z" fill="#333"/></svg>
<svg style="position:absolute;left:127px;top:253px" width="10" height="10" viewBox="0 0 10 10" ><path d="M1 1 L9 9 M9 1 L1 9" stroke="#777" stroke-width="1.2"/></svg>
<svg style="position:absolute;left:153.1px;top:258.0px" width="9" height="6" viewBox="0 0 9 6" ><path d="M1 1 H8 L4.5 5 Z" fill="#333"/></svg>
<svg style="position:absolute;left:172px;top:253px" width="16" height="16" viewBox="0 0 16 16" ><g fill="#2a2a2a"><path d="M2.5 2 H6 V5 L7 6 V14 C7 15.5 1 15.5 1 14 V7 L2.5 5 Z"/><path d="M10 2 H13.5 L15 5 V7 L15 14 C15 15.5 9 15.5 9 14 V6 L10 5 Z"/><rect x="6.5" y="5.5" width="3" height="4.5"/></g><path d="M3 8 V13 M11 8 V13" stroke="#9a9a9a" stroke-width="1"/><path d="M3.4 2.6 H5.2 M10.8 2.6 H12.6" stroke="#999" stroke-width="0.8"/></svg>
<svg style="position:absolute;left:198px;top:254px" width="16" height="15" viewBox="0 0 16 15" ><path d="M1 1 H15 L9.5 7.5 V14 L6.5 12 V7.5 Z" fill="#eceded" stroke="#b4b6b9" stroke-width="1.1"/></svg>
<svg style="position:absolute;left:226px;top:255px" width="12" height="12" viewBox="0 0 12 12" ><path d="M6 0.8 V11.2 M0.8 6 H11.2" stroke="#9a9c9f" stroke-width="2.4"/></svg>
<svg style="position:absolute;left:13px;top:1052px" width="17" height="18" viewBox="0 0 17 18" ><g fill="#fff" stroke="#1a2a9a" stroke-width="1.1"><rect x="3.5" y="1" width="3.4" height="3.4"/><rect x="3.5" y="7.3" width="3.4" height="3.4"/><rect x="3.5" y="13.6" width="3.4" height="3.4"/><rect x="10.5" y="7.3" width="3.4" height="3.4"/></g><path d="M5.2 4.4 V7.3 M5.2 10.7 V13.6 M6.9 9 H10.5" stroke="#1a2a9a" stroke-width="1"/></svg>
<svg style="position:absolute;left:38px;top:1052px" width="18" height="18" viewBox="0 0 18 18" ><circle cx="9" cy="9" r="6.6" fill="#39a8e8" stroke="#1a6ab0" stroke-width="0.8"/><path d="M5 6 C7 3.5 11 4 12.5 6.5 C11 7.5 9 6.5 8 8.5 C7 10.5 9.5 11 8.5 13.5 C6 13 4 9.5 5 6 Z" fill="#4cc04a"/><ellipse cx="9" cy="9" rx="9" ry="4" fill="none" stroke="#f2a81a" stroke-width="1.6" transform="rotate(-35 9 9)"/></svg>
<svg style="position:absolute;left:1042px;top:1048px" width="18" height="18" viewBox="0 0 18 18" ><rect x="1" y="1" width="13" height="12" fill="#eef4ff" stroke="#1a3a9a" stroke-width="1.4"/><circle cx="8" cy="7.2" r="4" fill="#fff" stroke="#444" stroke-width="1.1"/><path d="M11 10.4 L15.5 15.8" stroke="#7a4a1a" stroke-width="2.2" stroke-linecap="round"/></svg>
<svg style="position:absolute;left:1065px;top:1048px" width="18" height="18" viewBox="0 0 18 18" ><circle cx="7" cy="7" r="5" fill="#fff" stroke="#444" stroke-width="1.2"/><path d="M4.5 7 H9.5 M7 4.5 V9.5" stroke="#222" stroke-width="1.3"/><path d="M10.6 10.6 L15.5 15.8" stroke="#7a4a1a" stroke-width="2.2" stroke-linecap="round"/></svg>
<svg style="position:absolute;left:1089px;top:1048px" width="18" height="18" viewBox="0 0 18 18" ><circle cx="7" cy="7" r="5" fill="#fff" stroke="#444" stroke-width="1.2"/><path d="M4.5 7 H9.5" stroke="#222" stroke-width="1.3"/><path d="M10.6 10.6 L15.5 15.8" stroke="#7a4a1a" stroke-width="2.2" stroke-linecap="round"/></svg>
<svg style="position:absolute;left:1114px;top:1049px" width="16" height="16" viewBox="0 0 16 16" ><rect x="1" y="1" width="13" height="14" fill="#dbe9ff" stroke="#1a3a9a" stroke-width="1.4"/><path d="M11.5 3 L5 10.5 L4 13 L6.5 12 L13 4.5 Z" fill="#fff" stroke="#1a3a9a" stroke-width="0.8"/></svg>
<svg style="position:absolute;left:1138px;top:1049px" width="16" height="16" viewBox="0 0 16 16" ><path d="M1 4.5 H10.5 V14.5 H1 Z" fill="#fff" stroke="#567" stroke-width="0.9"/><path d="M1 4.5 L4.5 1 H14.5 L10.5 4.5 Z" fill="#cff" stroke="#567" stroke-width="0.8"/><path d="M10.5 4.5 L14.5 1 V11 L10.5 14.5 Z" fill="#4cc8cc" stroke="#567" stroke-width="0.8"/></svg>
<svg style="position:absolute;left:1160.1px;top:1053.0px" width="9" height="6" viewBox="0 0 9 6" ><path d="M1 1 H8 L4.5 5 Z" fill="#333"/></svg>
<svg style="position:absolute;left:1175px;top:1047px" width="18" height="18" viewBox="0 0 18 18" ><path d="M1 8 H8.5 V16 H1 Z" fill="#fff" stroke="#456" stroke-width="0.9"/><path d="M1 8 L4 5.5 H11.5 L8.5 8 Z M8.5 8 L11.5 5.5 V13.5 L8.5 16 Z" fill="#dff" stroke="#456" stroke-width="0.8"/></svg>
<div class="t " style="left:1181.5px;top:1048.4px;font-size:9px;line-height:9px;color:#111;letter-spacing:-0.508px;">AB</div>
<svg style="position:absolute;left:1198.0px;top:1053.0px" width="9" height="6" viewBox="0 0 9 6" ><path d="M1 1 H8 L4.5 5 Z" fill="#333"/></svg>
<svg style="position:absolute;left:1213px;top:1048px" width="18" height="18" viewBox="0 0 18 18" ><rect x="0.8" y="1" width="11" height="14" fill="#fcfcf6" stroke="#555" stroke-width="0.9"/><path d="M0.8 5 H11.8 M0.8 9 H11.8 M4.5 1 V15" stroke="#999" stroke-width="0.7"/><rect x="5.5" y="8.5" width="11.5" height="8.5" rx="1" fill="#b9b7a8" stroke="#222" stroke-width="0.9"/><circle cx="11.3" cy="12.8" r="2.6" fill="#fff" stroke="#222" stroke-width="1"/></svg>
<svg style="position:absolute;left:1237px;top:1047px" width="18" height="19" viewBox="0 0 18 19" ><g stroke="#8a4513" stroke-width="1.4"><path d="M2 1.5 L5.5 5 M5.5 1.5 L2 5"/><path d="M9 1 L3 17 M4 8 L15 17 M15 7 L6 16"/></g><path d="M12 2 L16 6" stroke="#8a4513" stroke-width="1.2"/></svg>
<svg style="position:absolute;left:1260.2px;top:1053.0px" width="9" height="6" viewBox="0 0 9 6" ><path d="M1 1 H8 L4.5 5 Z" fill="#333"/></svg>
<svg style="position:absolute;left:1274px;top:1047px" width="18" height="19" viewBox="0 0 18 19" ><rect x="1" y="1" width="9" height="5" fill="#f8f0a0" stroke="#7a6a10" stroke-width="0.8"/><path d="M11.5 2 H16 L11.5 7.5 H16" fill="none" stroke="#222" stroke-width="1.1"/><ellipse cx="10" cy="13" rx="5.5" ry="3" fill="#cfd2d6" stroke="#444" stroke-width="0.8"/><path d="M7 9.5 L13 16.5 M13 9.5 L7 16.5" stroke="#1a7ac8" stroke-width="1.2"/></svg>
<svg style="position:absolute;left:1298px;top:1048px" width="20" height="18" viewBox="0 0 20 18" ><path d="M8 9 L3.5 3 M8 9 L3.5 15 M8 9 L16 8" stroke="#222" stroke-width="1.2"/><circle cx="3.5" cy="3" r="2.6" fill="#2ad02a" stroke="#0a6a0a" stroke-width="0.6"/><circle cx="3.5" cy="15" r="2.6" fill="#2ad8e8" stroke="#0a6a8a" stroke-width="0.6"/><circle cx="16.5" cy="8" r="2.6" fill="#e81a1a" stroke="#7a0a0a" stroke-width="0.6"/></svg>
<svg style="position:absolute;left:1400px;top:1049px" width="17" height="17" viewBox="0 0 17 17" ><g fill="#2a2a2a"><path d="M2.5 2 H6 V5 L7 6 V14 C7 15.5 1 15.5 1 14 V7 L2.5 5 Z"/><path d="M10 2 H13.5 L15 5 V7 L15 14 C15 15.5 9 15.5 9 14 V6 L10 5 Z"/><rect x="6.5" y="5.5" width="3" height="4.5"/></g><path d="M3 8 V13 M11 8 V13" stroke="#9a9a9a" stroke-width="1"/><path d="M3.4 2.6 H5.2 M10.8 2.6 H12.6" stroke="#999" stroke-width="0.8"/></svg>
<svg style="position:absolute;left:1445px;top:1049px" width="20" height="18" viewBox="0 0 20 18" ><path d="M1.5 6.5 H13 V16.5 H1.5 Z" fill="#fbfbfb" stroke="#222" stroke-width="1.2"/><path d="M1.5 6.5 L6 2 H18 L13 6.5 M18 2 V11.5 L13 16.5" fill="#fbfbfb" stroke="#222" stroke-width="1.2"/><rect x="3.5" y="9.5" width="5.5" height="5" fill="#f2ee1a"/><rect x="5" y="11" width="2.4" height="2.4" fill="#2ad8e8"/></svg>
<svg style="position:absolute;left:13px;top:283.5px" width="15" height="14" viewBox="0 0 15 14" ><path d="M1 3.5 L3.5 1 H14 V10.5 L11.5 13 H1 Z" fill="#f5d94a" stroke="#9a7a10" stroke-width="1"/><path d="M4.5 2.5 H12.5 V9 H4.5 Z" fill="#8ff4f4" stroke="#3c7a80" stroke-width="0.8"/></svg>
<div class="t tr" style="left:32.4px;top:283.7px;font-size:13px;line-height:13px;color:#3a3a3a;letter-spacing:-0.173px;">TUBE_SQUEEZER_2_B1.ASM</div>
<svg style="position:absolute;left:18.5px;top:303.5px" width="7" height="10" viewBox="0 0 7 10" ><path d="M0.5 0.5 V9.5 L6.5 5 Z" fill="#7d7d7d"/></svg>
<svg style="position:absolute;left:33px;top:301.5px" width="16" height="15" viewBox="0 0 16 15" ><path d="M1 4 H8 L10 2.5 V8 L8 9.5 H1 Z" fill="#7ff0f0" stroke="#3c4650" stroke-width="0.9"/><circle cx="11.5" cy="4.5" r="3.6" fill="#3e7be0" stroke="#1d3f94" stroke-width="0.7"/><circle cx="10.6" cy="3.6" r="1.3" fill="#bcd6ff"/><path d="M7.5 6 L11 13 H3.5 Z" fill="#e8c83a" stroke="#6a5a10" stroke-width="0.9"/></svg>
<div class="t tr" style="left:51.9px;top:301.7px;font-size:13px;line-height:13px;color:#3a3a3a;letter-spacing:0.292px;">Gruppe ORIGIN</div>
<svg style="position:absolute;left:18.5px;top:321.5px" width="7" height="10" viewBox="0 0 7 10" ><path d="M0.5 0.5 V9.5 L6.5 5 Z" fill="#7d7d7d"/></svg>
<svg style="position:absolute;left:33.8px;top:320.5px" width="14" height="13" viewBox="0 0 14 13" ><path d="M1.5 2.5 H10 L12.5 0.8 V9.5 L10 11.8 H1.5 Z" fill="#7ff0f0" stroke="#3c4650" stroke-width="1"/><path d="M10 2.5 V11.8 M10 2.5 L12.5 0.8" stroke="#3c4650" stroke-width="1" fill="none"/><path d="M10.5 2.6 L12 1.6 V9.3 L10.5 10.8 Z" fill="#1a9aa0"/></svg>
<div class="t tr" style="left:51.9px;top:319.7px;font-size:13px;line-height:13px;color:#3a3a3a;letter-spacing:-0.109px;">COMPONENT_1_B2.PRT</div>
<svg style="position:absolute;left:18.5px;top:339.5px" width="7" height="10" viewBox="0 0 7 10" ><path d="M0.5 0.5 V9.5 L6.5 5 Z" fill="#7d7d7d"/></svg>
<svg style="position:absolute;left:33.8px;top:338.5px" width="14" height="13" viewBox="0 0 14 13" ><path d="M1.5 2.5 H10 L12.5 0.8 V9.5 L10 11.8 H1.5 Z" fill="#7ff0f0" stroke="#3c4650" stroke-width="1"/><path d="M10 2.5 V11.8 M10 2.5 L12.5 0.8" stroke="#3c4650" stroke-width="1" fill="none"/><path d="M10.5 2.6 L12 1.6 V9.3 L10.5 10.8 Z" fill="#1a9aa0"/></svg>
<div class="t tr" style="left:51.9px;top:337.7px;font-size:13px;line-height:13px;color:#3a3a3a;letter-spacing:-0.109px;">COMPONENT_2_B2.PRT</div>
<svg style="position:absolute;left:18.5px;top:357.5px" width="7" height="10" viewBox="0 0 7 10" ><path d="M0.5 0.5 V9.5 L6.5 5 Z" fill="#7d7d7d"/></svg>
<svg style="position:absolute;left:33.8px;top:356.5px" width="14" height="13" viewBox="0 0 14 13" ><path d="M1.5 2.5 H10 L12.5 0.8 V9.5 L10 11.8 H1.5 Z" fill="#7ff0f0" stroke="#3c4650" stroke-width="1"/><path d="M10 2.5 V11.8 M10 2.5 L12.5 0.8" stroke="#3c4650" stroke-width="1" fill="none"/><path d="M10.5 2.6 L12 1.6 V9.3 L10.5 10.8 Z" fill="#1a9aa0"/></svg>
<div class="t tr" style="left:51.9px;top:355.7px;font-size:13px;line-height:13px;color:#3a3a3a;letter-spacing:-0.174px;">DRUCKFEDER_1_L2.PRT</div>
<svg style="position:absolute;left:18.5px;top:375.5px" width="7" height="10" viewBox="0 0 7 10" ><path d="M0.5 0.5 V9.5 L6.5 5 Z" fill="#7d7d7d"/></svg>
<svg style="position:absolute;left:33.8px;top:374.5px" width="14" height="13" viewBox="0 0 14 13" ><path d="M1.5 2.5 H10 L12.5 0.8 V9.5 L10 11.8 H1.5 Z" fill="#7ff0f0" stroke="#3c4650" stroke-width="1"/><path d="M10 2.5 V11.8 M10 2.5 L12.5 0.8" stroke="#3c4650" stroke-width="1" fill="none"/><path d="M10.5 2.6 L12 1.6 V9.3 L10.5 10.8 Z" fill="#1a9aa0"/></svg>
<div class="t tr" style="left:51.9px;top:373.7px;font-size:13px;line-height:13px;color:#3a3a3a;letter-spacing:-0.109px;">COMPONENT_3_B1.PRT</div>
<svg style="position:absolute;left:18.5px;top:393.5px" width="7" height="10" viewBox="0 0 7 10" ><path d="M0.5 0.5 V9.5 L6.5 5 Z" fill="#7d7d7d"/></svg>
<svg style="position:absolute;left:33.8px;top:392.5px" width="14" height="13" viewBox="0 0 14 13" ><path d="M1.5 2.5 H10 L12.5 0.8 V9.5 L10 11.8 H1.5 Z" fill="#7ff0f0" stroke="#3c4650" stroke-width="1"/><path d="M10 2.5 V11.8 M10 2.5 L12.5 0.8" stroke="#3c4650" stroke-width="1" fill="none"/><path d="M10.5 2.6 L12 1.6 V9.3 L10.5 10.8 Z" fill="#1a9aa0"/></svg>
<div class="t tr" style="left:51.9px;top:391.7px;font-size:13px;line-height:13px;color:#3a3a3a;letter-spacing:-0.109px;">COMPONENT_4_B1.PRT</div>
<svg style="position:absolute;left:33.3px;top:411.5px" width="15" height="10" viewBox="0 0 15 10" ><path d="M4 1 H14 L10.5 9 H0.8 Z" fill="#fff8f0" stroke="#8a4513" stroke-width="1.3"/></svg>
<div class="t tr" style="left:51.9px;top:409.7px;font-size:13px;line-height:13px;color:#3a3a3a;letter-spacing:-0.073px;">ADTM_SCHNITT_D</div>
<svg style="position:absolute;left:18.5px;top:429.5px" width="7" height="10" viewBox="0 0 7 10" ><path d="M0.5 0.5 V9.5 L6.5 5 Z" fill="#7d7d7d"/></svg>
<svg style="position:absolute;left:33.8px;top:428.5px" width="14" height="13" viewBox="0 0 14 13" ><path d="M1.5 2.5 H10 L12.5 0.8 V9.5 L10 11.8 H1.5 Z" fill="#7ff0f0" stroke="#3c4650" stroke-width="1"/><path d="M10 2.5 V11.8 M10 2.5 L12.5 0.8" stroke="#3c4650" stroke-width="1" fill="none"/><path d="M10.5 2.6 L12 1.6 V9.3 L10.5 10.8 Z" fill="#1a9aa0"/></svg>
<div class="t tr" style="left:51.9px;top:427.7px;font-size:13px;line-height:13px;color:#3a3a3a;letter-spacing:-0.174px;">DRUCKFEDER_1_L2.PRT</div>
<svg style="position:absolute;left:33.3px;top:447.5px" width="15" height="10" viewBox="0 0 15 10" ><path d="M4 1 H14 L10.5 9 H0.8 Z" fill="#fff8f0" stroke="#8a4513" stroke-width="1.3"/></svg>
<div class="t tr" style="left:51.9px;top:445.7px;font-size:13px;line-height:13px;color:#3a3a3a;letter-spacing:-0.128px;">ADTM_SCHNITT_E</div>
<svg style="position:absolute;left:18.5px;top:465.5px" width="7" height="10" viewBox="0 0 7 10" ><path d="M0.5 0.5 V9.5 L6.5 5 Z" fill="#7d7d7d"/></svg>
<svg style="position:absolute;left:33.8px;top:464.5px" width="14" height="13" viewBox="0 0 14 13" ><path d="M1.5 2.5 H10 L12.5 0.8 V9.5 L10 11.8 H1.5 Z" fill="#7ff0f0" stroke="#3c4650" stroke-width="1"/><path d="M10 2.5 V11.8 M10 2.5 L12.5 0.8" stroke="#3c4650" stroke-width="1" fill="none"/><path d="M10.5 2.6 L12 1.6 V9.3 L10.5 10.8 Z" fill="#1a9aa0"/></svg>
<div class="t tr" style="left:51.9px;top:463.7px;font-size:13px;line-height:13px;color:#3a3a3a;letter-spacing:-0.121px;">BLECHSCHRAUBE_2D2.PRT</div>
<svg style="position:absolute;left:18.5px;top:483.5px" width="7" height="10" viewBox="0 0 7 10" ><path d="M0.5 0.5 V9.5 L6.5 5 Z" fill="#7d7d7d"/></svg>
<svg style="position:absolute;left:33.8px;top:482.5px" width="14" height="13" viewBox="0 0 14 13" ><path d="M1.5 2.5 H10 L12.5 0.8 V9.5 L10 11.8 H1.5 Z" fill="#7ff0f0" stroke="#3c4650" stroke-width="1"/><path d="M10 2.5 V11.8 M10 2.5 L12.5 0.8" stroke="#3c4650" stroke-width="1" fill="none"/><path d="M10.5 2.6 L12 1.6 V9.3 L10.5 10.8 Z" fill="#1a9aa0"/></svg>
<div class="t tr" style="left:51.9px;top:481.7px;font-size:13px;line-height:13px;color:#3a3a3a;letter-spacing:-0.121px;">BLECHSCHRAUBE_2D2.PRT</div>
<svg style="position:absolute;left:18.5px;top:501.5px" width="7" height="10" viewBox="0 0 7 10" ><path d="M0.5 0.5 V9.5 L6.5 5 Z" fill="#7d7d7d"/></svg>
<svg style="position:absolute;left:33.8px;top:500.5px" width="14" height="13" viewBox="0 0 14 13" ><path d="M1.5 2.5 H10 L12.5 0.8 V9.5 L10 11.8 H1.5 Z" fill="#7ff0f0" stroke="#3c4650" stroke-width="1"/><path d="M10 2.5 V11.8 M10 2.5 L12.5 0.8" stroke="#3c4650" stroke-width="1" fill="none"/><path d="M10.5 2.6 L12 1.6 V9.3 L10.5 10.8 Z" fill="#1a9aa0"/></svg>
<div class="t tr" style="left:51.9px;top:499.7px;font-size:13px;line-height:13px;color:#3a3a3a;letter-spacing:-0.121px;">BLECHSCHRAUBE_2D2.PRT</div>
<svg style="position:absolute;left:18.5px;top:519.5px" width="7" height="10" viewBox="0 0 7 10" ><path d="M0.5 0.5 V9.5 L6.5 5 Z" fill="#7d7d7d"/></svg>
<svg style="position:absolute;left:33.8px;top:518.5px" width="14" height="13" viewBox="0 0 14 13" ><path d="M1.5 2.5 H10 L12.5 0.8 V9.5 L10 11.8 H1.5 Z" fill="#7ff0f0" stroke="#3c4650" stroke-width="1"/><path d="M10 2.5 V11.8 M10 2.5 L12.5 0.8" stroke="#3c4650" stroke-width="1" fill="none"/><path d="M10.5 2.6 L12 1.6 V9.3 L10.5 10.8 Z" fill="#1a9aa0"/></svg>
<div class="t tr" style="left:51.9px;top:517.7px;font-size:13px;line-height:13px;color:#3a3a3a;letter-spacing:-0.121px;">BLECHSCHRAUBE_2D2.PRT</div>
<svg style="position:absolute;left:18.5px;top:537.5px" width="7" height="10" viewBox="0 0 7 10" ><path d="M0.5 0.5 V9.5 L6.5 5 Z" fill="#7d7d7d"/></svg>
<svg style="position:absolute;left:33.8px;top:536.5px" width="14" height="13" viewBox="0 0 14 13" ><path d="M1.5 2.5 H10 L12.5 0.8 V9.5 L10 11.8 H1.5 Z" fill="#7ff0f0" stroke="#3c4650" stroke-width="1"/><path d="M10 2.5 V11.8 M10 2.5 L12.5 0.8" stroke="#3c4650" stroke-width="1" fill="none"/><path d="M10.5 2.6 L12 1.6 V9.3 L10.5 10.8 Z" fill="#1a9aa0"/></svg>
<div class="t tr" style="left:51.9px;top:535.7px;font-size:13px;line-height:13px;color:#3a3a3a;letter-spacing:-0.121px;">BLECHSCHRAUBE_2D2.PRT</div>
<svg style="position:absolute;left:18.5px;top:555.5px" width="7" height="10" viewBox="0 0 7 10" ><path d="M0.5 0.5 V9.5 L6.5 5 Z" fill="#7d7d7d"/></svg>
<svg style="position:absolute;left:33.8px;top:554.5px" width="14" height="13" viewBox="0 0 14 13" ><path d="M1.5 2.5 H10 L12.5 0.8 V9.5 L10 11.8 H1.5 Z" fill="#7ff0f0" stroke="#3c4650" stroke-width="1"/><path d="M10 2.5 V11.8 M10 2.5 L12.5 0.8" stroke="#3c4650" stroke-width="1" fill="none"/><path d="M10.5 2.6 L12 1.6 V9.3 L10.5 10.8 Z" fill="#1a9aa0"/></svg>
<div class="t tr" style="left:51.9px;top:553.7px;font-size:13px;line-height:13px;color:#3a3a3a;letter-spacing:-0.121px;">BLECHSCHRAUBE_2D2.PRT</div>
<svg style="position:absolute;left:34px;top:572.5px" width="13" height="12" viewBox="0 0 13 12" ><path d="M1 4.6 H6.5 V0.8 L12.2 6 L6.5 11.2 V7.4 H1 Z" fill="#e01010" stroke="#7a0000" stroke-width="0.6"/></svg>
<div class="t tr" style="left:51.9px;top:571.7px;font-size:13px;line-height:13px;color:#3a3a3a;letter-spacing:0.667px;">Hier einfügen</div>
<svg style="position:absolute;left:17px;top:593.0px" width="10" height="7" viewBox="0 0 10 7" ><path d="M0.5 0.5 H9.5 L5 6.5 Z" fill="#7d7d7d"/></svg>
<svg style="position:absolute;left:33px;top:589.5px" width="16" height="15" viewBox="0 0 16 15" ><path d="M1 4.5 L5.5 1 L15 1 L15 9.5 L5 13.5 H1 Z" fill="#f2e6a8" stroke="#8d8d84" stroke-width="0.9"/><path d="M4.8 5 L15 1 V9.5 L4.8 13.5 Z" fill="#a8d8f4" stroke="#6a8296" stroke-width="0.9"/></svg>
<div class="t tr" style="left:53.0px;top:589.7px;font-size:13px;line-height:13px;color:#3a3a3a;letter-spacing:0.502px;">Schnitte</div>
<div style="position:absolute;left:71px;top:606px;width:11px;height:17px;background:#a9d9f5;"></div>
<svg style="position:absolute;left:53px;top:607.5px" width="16" height="15" viewBox="0 0 16 15" ><path d="M1 4.5 L5.5 1 L15 1 L15 9.5 L5 13.5 H1 Z" fill="#f2e6a8" stroke="#8d8d84" stroke-width="0.9"/><path d="M4.8 5 L15 1 V9.5 L4.8 13.5 Z" fill="#a8d8f4" stroke="#6a8296" stroke-width="0.9"/><rect x="7" y="6" width="8" height="8" fill="#4be04b"/><path d="M11 7.2 L13.8 10 L11 12.8 L8.2 10 Z" fill="#eaffea" stroke="#0b5f0b" stroke-width="1.1"/></svg>
<div class="t tr" style="left:71.8px;top:607.7px;font-size:13px;line-height:13px;color:#3a3a3a;letter-spacing:0.328px;">A</div>
<svg style="position:absolute;left:53px;top:625.5px" width="16" height="15" viewBox="0 0 16 15" ><path d="M1 4.5 L5.5 1 L15 1 L15 9.5 L5 13.5 H1 Z" fill="#f2e6a8" stroke="#8d8d84" stroke-width="0.9"/><path d="M4.8 5 L15 1 V9.5 L4.8 13.5 Z" fill="#a8d8f4" stroke="#6a8296" stroke-width="0.9"/></svg>
<div class="t tr" style="left:71.8px;top:625.7px;font-size:13px;line-height:13px;color:#3a3a3a;letter-spacing:-0.172px;">B</div>
<svg style="position:absolute;left:53px;top:643.5px" width="16" height="15" viewBox="0 0 16 15" ><path d="M1 4.5 L5.5 1 L15 1 L15 9.5 L5 13.5 H1 Z" fill="#f2e6a8" stroke="#8d8d84" stroke-width="0.9"/><path d="M4.8 5 L15 1 V9.5 L4.8 13.5 Z" fill="#a8d8f4" stroke="#6a8296" stroke-width="0.9"/></svg>
<div class="t tr" style="left:71.8px;top:643.7px;font-size:13px;line-height:13px;color:#3a3a3a;letter-spacing:-0.891px;">C</div>
<svg style="position:absolute;left:53px;top:661.5px" width="16" height="15" viewBox="0 0 16 15" ><path d="M1 4.5 L5.5 1 L15 1 L15 9.5 L5 13.5 H1 Z" fill="#f2e6a8" stroke="#8d8d84" stroke-width="0.9"/><path d="M4.8 5 L15 1 V9.5 L4.8 13.5 Z" fill="#a8d8f4" stroke="#6a8296" stroke-width="0.9"/></svg>
<div class="t tr" style="left:71.8px;top:661.7px;font-size:13px;line-height:13px;color:#3a3a3a;letter-spacing:-0.391px;">D</div>
<svg style="position:absolute;left:53px;top:679.5px" width="16" height="15" viewBox="0 0 16 15" ><path d="M1 4.5 L5.5 1 L15 1 L15 9.5 L5 13.5 H1 Z" fill="#f2e6a8" stroke="#8d8d84" stroke-width="0.9"/><path d="M4.8 5 L15 1 V9.5 L4.8 13.5 Z" fill="#a8d8f4" stroke="#6a8296" stroke-width="0.9"/></svg>
<div class="t tr" style="left:71.8px;top:679.7px;font-size:13px;line-height:13px;color:#3a3a3a;letter-spacing:-0.672px;">E</div>
<svg style="position:absolute;left:53px;top:697.5px" width="16" height="15" viewBox="0 0 16 15" ><path d="M1 4.5 L5.5 1 L15 1 L15 9.5 L5 13.5 H1 Z" fill="#f2e6a8" stroke="#8d8d84" stroke-width="0.9"/><path d="M4.8 5 L15 1 V9.5 L4.8 13.5 Z" fill="#a8d8f4" stroke="#6a8296" stroke-width="0.9"/></svg>
<div class="t tr" style="left:71.8px;top:697.7px;font-size:13px;line-height:13px;color:#3a3a3a;letter-spacing:-0.453px;">F</div>
<svg style="position:absolute;left:251px;top:175px" width="1511" height="863" viewBox="251 175 1511 863" ><defs><linearGradient id="gh1" x1="0" x2="1" y1="0" y2="0.3"><stop offset="0" stop-color="#6a7b8e"/><stop offset="0.5" stop-color="#56687c"/><stop offset="0.85" stop-color="#3c4e63"/><stop offset="1" stop-color="#2a3d54"/></linearGradient><linearGradient id="gh2" x1="0" x2="1" y1="0" y2="0"><stop offset="0" stop-color="#46566a"/><stop offset="0.75" stop-color="#3a4b5f"/><stop offset="1" stop-color="#2e4056"/></linearGradient><linearGradient id="gcyl" x1="0" x2="1" y1="0" y2="0"><stop offset="0" stop-color="#9a9a9a"/><stop offset="0.35" stop-color="#d9d9d9"/><stop offset="1" stop-color="#a6a6a6"/></linearGradient><linearGradient id="gcyl2" x1="0" x2="1" y1="0" y2="0"><stop offset="0" stop-color="#c4c4c4"/><stop offset="0.5" stop-color="#b0b0b0"/><stop offset="1" stop-color="#8e8e8e"/></linearGradient><linearGradient id="gbase" x1="0" x2="1" y1="0" y2="0"><stop offset="0" stop-color="#727272"/><stop offset="0.6" stop-color="#666"/><stop offset="1" stop-color="#8a8a8a"/></linearGradient><linearGradient id="gchan" x1="0" x2="1" y1="0" y2="0"><stop offset="0" stop-color="#5d6b79"/><stop offset="1" stop-color="#8c8c8c"/></linearGradient><linearGradient id="gchan2" x1="0" x2="1" y1="0" y2="0.25"><stop offset="0" stop-color="#55667a"/><stop offset="0.5" stop-color="#6b7886"/><stop offset="1" stop-color="#8a8c8e"/></linearGradient><radialGradient id="ghead" cx="0.55" cy="0.3" r="0.7"><stop offset="0" stop-color="#c4a016"/><stop offset="0.6" stop-color="#94780c"/><stop offset="1" stop-color="#6a5606"/></radialGradient></defs><path d="M1470 932 L1470 1013 C1500 1009 1538 996 1538 966 L1538 890 Z" fill="url(#gbase)"/><path d="M1421 900 L1470 934 C1500 931 1538 916 1538 893 C1538 876 1510 860 1470 852 L1421 840 Z" fill="#9b9b9b"/><path d="M1470 938 C1500 935 1538 920 1538 896" fill="none" stroke="#4a4a4a" stroke-width="0.8"/><path d="M1470 934 C1500 931 1536 917 1537.5 893" fill="none" stroke="#b4b4b4" stroke-width="1"/><path d="M1470 1008 C1500 1004 1532 991 1537 969" fill="none" stroke="#3a3a3a" stroke-width="0.8"/><path d="M1440 700 L1497 708 C1520 710 1538 735 1538 764 L1538 899 C1532 882 1502 868 1470 863 L1440 850 Z" fill="url(#gh2)"/><path d="M1470 863 C1502 868 1532 882 1538 899" fill="none" stroke="#c2c8ce" stroke-width="1.2" opacity="0.85"/><path d="M1416 607 C1455 600 1497 625 1497 660 L1497 712 L1440 722 L1416 700 Z" fill="url(#gh1)"/><g fill="none" stroke="#b4bcc4" stroke-width="1.1" opacity="0.85"><path d="M1417 608 C1440 608 1454 616 1452 626 C1450 637 1432 642 1418 642"/><path d="M1427 642 C1465 642 1499 655 1497 672 C1495 688 1470 696 1450 697.5"/><path d="M1450 701 C1480 702 1504 714 1502 728 C1500 742 1474 750 1452 752"/><path d="M1450 706 C1476 706 1498 716 1497 728"/><path d="M1450 720 C1490 714 1540 735 1538 757 C1536 778 1500 792 1471 796"/><path d="M1494 727 V870"/></g><rect x="1397" y="492" width="21" height="150" fill="url(#gcyl)"/><path d="M1397 500 C1405 494 1417 496 1418 504" fill="none" stroke="#eee" stroke-width="1"/><rect x="621" y="335" width="20" height="70" fill="url(#gcyl)"/><rect x="1279" y="488" width="21.5" height="150" fill="url(#gcyl2)"/><defs><linearGradient id="gtl" x1="0" x2="0" y1="0" y2="1"><stop offset="0" stop-color="#2a3d54"/><stop offset="1" stop-color="#5d6e80"/></linearGradient></defs><path d="M640 368 C655 368 672 374 674 382 L674 450 L640 440 Z" fill="url(#gtl)"/><g fill="none" stroke="#aeb6be" stroke-width="0.9" opacity="0.8"><path d="M640 372 C655 372 672 380 674 390"/><path d="M640 386 C650 388 652 396 644 400"/><path d="M640 402 C655 404 668 400 674 394"/></g><path d="M522 368 C535 363 550 364 560 368 L560 385 L530 376 Z" fill="#3f5166" opacity="0.55"/><path d="M520 370 C532 364 550 364 560 367" fill="none" stroke="#8f9aa6" stroke-width="0.8" opacity="0.7"/><path d="M574 221 C578 214 596 212 606 217 C620 220 633 227 634 236 L634 250 L617 262 L590 252 L577 224 Z" fill="url(#ghead)"/><path d="M578.5 222 L587 246 L598 222 M583.5 221 L588 240 L594 221" fill="none" stroke="#2a2408" stroke-width="0.8"/><path d="M600 224 C612 224 626 228 628 233 C626 230 612 221 600 221" fill="none" stroke="#3a3008" stroke-width="0.8"/><path d="M1352 458 C1358 452 1376 452 1385 455 C1398 458 1410 466 1410.5 472 L1410.5 490 C1409 496 1402 500 1394 501 L1365 488 Z" fill="url(#ghead)"/><path d="M1394 482 C1400 482 1408 479 1410.5 475 L1410.5 490 C1409 496 1402 500 1394 501 Z" fill="#85700c"/><path d="M1394 482 C1400 482 1408 479 1410.5 475" fill="none" stroke="#4a3e08" stroke-width="0.8"/><path d="M1355 458.5 L1364.5 484 L1375.5 459 M1360 458 L1365.5 478 L1371.5 458" fill="none" stroke="#2a2408" stroke-width="0.8"/><path d="M1377 461 C1389 461 1402 465 1404 470 C1402 466 1389 458 1377 458" fill="none" stroke="#3a3008" stroke-width="0.8"/><path d="M619.8 234.6 L1332.6 452.7" stroke="#42536a" stroke-width="2.2" fill="none"/><path d="M532.1 555.3 L1420.3 827.1 L1420.3 919.1 L532.1 647.3 Z" fill="#8c8c8c"/><path d="M532 545 L720 602 L720 652 C680 625 620 614 532 618 Z" fill="url(#gchan2)"/><path d="M532 617 C570 612 640 612 672 640 L680 660 L532 640 Z" fill="#8f9296"/><path d="M532 640 C575 632 640 634 690 672 L560 660 Z" fill="#8a8a8a"/><path d="M532 617 C575 610 640 612 676 640" fill="none" stroke="#a7adb3" stroke-width="1.5"/><path d="M532 640 C575 633 630 636 670 655" fill="none" stroke="#9ea3a8" stroke-width="1.2"/><path d="M645 680 L800 655 M655 682 L760 662" stroke="#333" stroke-width="0.9" fill="none"/><path d="M1340 843 C1341 841 1345 842 1346.5 846 L1421 868 L1421 862 L1346.5 877 L1340 874 Z" fill="#7d858d"/><path d="M1346.5 846 L1421 835 L1421 862 L1346.5 877 Z" fill="#7b838b"/><path d="M1312.2 883.6 L1419.8 862 L1421 862 L1421 920 L1330 892 Z" fill="#959595"/><path d="M1363 874.5 C1385 874 1405 876 1421 879.5 L1421 876 C1405 872.5 1385 871 1366 872 Z" fill="#a2a6aa"/><path d="M1312.2 883.6 L1419.8 862" fill="none" stroke="#2c2c2c" stroke-width="0.9"/><path d="M1340 874 V846 C1340 842 1345 841 1346.5 846 V877" fill="none" stroke="#a9aeb3" stroke-width="0.8"/><path d="M486.4 632.3 L1466.0 932.0 Q1470.5 933.4 1470.5 937.9 L1470.5 1008.7 Q1470.5 1013.2 1466.0 1011.8 L486.4 712.1 Q481.9 710.7 481.9 706.2 L481.9 635.4 Q481.9 630.9 486.4 632.3 Z" fill="#874106" stroke="#ffff00" stroke-width="1.5" stroke-linejoin="round" /><path d="M502.6 410.2 C502.6 385.2 511.0 365.1 527.0 370.0 L553.5 378.1 L553.5 419.8 L532.1 413.3 L532.1 642.3 Q532.1 645.9 528.5 644.8 L486.4 631.9 Q481.9 630.5 481.9 626.0 L481.9 490.9 C481.9 473.9 490.0 466.4 499.0 466.1 L502.6 465.7 Z" fill="#874106" stroke="#ffff00" stroke-width="1.5" stroke-linejoin="round" /><path d="M1449.8 700.1 C1449.8 675.1 1441.4 649.8 1425.4 644.9 L1398.9 636.8 L1398.9 678.5 L1420.3 685.1 L1420.3 914.1 Q1420.3 917.7 1423.9 918.8 L1466.0 931.6 Q1470.5 933.0 1470.5 928.5 L1470.5 793.4 C1470.5 776.4 1462.4 763.9 1453.4 758.2 L1449.8 755.6 Z" fill="#874106" stroke="#ffff00" stroke-width="1.5" stroke-linejoin="round" /><path d="M673.7 304.6 L1278.7 489.7 L1278.7 641.2 L1309.2 650.6 L1309.2 758.1 L1323.4 762.4 Q1330.6 764.6 1330.6 756.6 L1330.6 508.6 Q1330.6 505.6 1333.4 506.5 L1348.5 511.1 L1348.5 512.9 L1353.2 518.7 L1353.2 520.7 L1353.2 523.8 L1348.5 526.8 L1348.5 529.7 L1353.2 535.5 L1353.2 537.5 L1353.2 540.5 L1348.5 543.6 L1348.5 546.5 L1353.2 552.3 L1353.2 554.3 L1353.2 557.4 L1348.5 560.4 L1348.5 563.3 L1353.2 569.1 L1353.2 571.1 L1353.2 574.2 L1348.5 577.2 L1348.5 580.1 L1353.2 585.9 L1353.2 587.9 L1353.2 591.0 L1348.5 594.0 L1348.5 596.9 L1353.2 602.7 L1353.2 604.7 L1353.2 607.8 L1348.5 610.8 L1348.5 613.7 L1348.9 616.7 L1352.4 618.3 L1352.4 628.3 L1361.9 640.2 L1366.4 641.6 L1376.1 635.5 L1376.1 625.5 L1380.1 626.3 L1376.0 623.1 L1376.0 620.1 L1376.0 618.1 L1380.5 615.1 L1380.5 612.2 L1376.0 606.3 L1376.0 603.3 L1376.0 601.3 L1380.5 598.3 L1380.5 595.4 L1376.0 589.5 L1376.0 586.5 L1376.0 584.5 L1380.5 581.5 L1380.5 578.6 L1376.0 572.7 L1376.0 569.7 L1376.0 567.7 L1380.5 564.7 L1380.5 561.8 L1376.0 555.9 L1376.0 552.9 L1376.0 550.9 L1380.5 547.9 L1380.5 545.0 L1376.0 539.1 L1376.0 536.1 L1376.0 534.1 L1380.5 531.1 L1380.5 528.2 L1376.0 522.3 L1376.0 519.5 L1398.9 526.5 L1398.9 777.5 Q1398.9 785.5 1406.4 787.8 L1420.3 792.1 L1420.3 842.1 C1420.3 857.1 1412.4 862.1 1402.4 859.1 L554.0 599.5 C540.0 595.2 532.1 581.3 532.1 561.3 L532.1 520.3 L546.0 524.5 Q553.5 526.8 553.5 518.8 L553.5 267.8 L576.4 274.8 L576.4 277.6 L571.9 280.8 L571.9 283.7 L576.4 289.4 L576.4 291.4 L576.4 294.4 L571.9 297.6 L571.9 300.5 L576.4 306.2 L576.4 308.2 L576.4 311.2 L571.9 314.4 L571.9 317.3 L576.4 323.0 L576.4 325.0 L576.4 328.0 L571.9 331.2 L571.9 334.1 L576.4 339.8 L576.4 341.8 L576.4 344.8 L571.9 348.0 L571.9 350.9 L576.4 356.6 L576.4 358.6 L576.4 361.6 L571.9 364.8 L571.9 367.7 L576.4 373.4 L576.4 375.4 L576.4 378.4 L572.3 379.1 L576.3 380.8 L576.3 390.8 L586.0 402.8 L590.5 404.1 L600.0 398.0 L600.0 388.0 L603.5 388.6 L603.9 385.9 L603.9 383.0 L599.2 377.0 L599.2 374.0 L599.2 372.0 L603.9 369.1 L603.9 366.2 L599.2 360.2 L599.2 357.2 L599.2 355.2 L603.9 352.3 L603.9 349.4 L599.2 343.4 L599.2 340.4 L599.2 338.4 L603.9 335.5 L603.9 332.6 L599.2 326.6 L599.2 323.6 L599.2 321.6 L603.9 318.7 L603.9 315.8 L599.2 309.8 L599.2 306.8 L599.2 304.8 L603.9 301.9 L603.9 299.0 L599.2 293.0 L599.2 290.0 L599.2 288.0 L603.9 285.1 L603.9 283.2 L619.0 287.9 Q621.8 288.7 621.8 291.7 L621.8 539.7 Q621.8 547.7 629.0 549.9 L643.2 554.3 L643.2 446.8 L673.7 456.1 Z" fill="#874106" stroke="#ffff00" stroke-width="1.5" stroke-linejoin="round" /><path d="M621.8 400.2 L644.0 407.0 C661.0 412.7 673.7 431.6 673.7 450.6 L673.7 456.1 L625.0 441.2 Q621.8 440.2 621.8 436.7 Z" fill="#874106" stroke="#ffff00" stroke-width="1.5" stroke-linejoin="round" /><path d="M1330.6 617.1 L1308.4 610.3 C1291.4 605.6 1278.7 616.7 1278.7 635.7 L1278.7 641.2 L1327.4 656.1 Q1330.6 657.1 1330.6 653.6 Z" fill="#874106" stroke="#ffff00" stroke-width="1.5" stroke-linejoin="round" /><path d="M619.8 237.1 L1332.6 455.2 L1332.6 484.7 L1348.5 489.6 L1348.5 511.1 L1330.6 505.6 L1330.6 557.6 L1283.7 543.3 L1283.7 491.3 L668.7 303.1 L668.7 355.1 L621.8 340.7 L621.8 288.7 L603.9 283.2 L603.9 261.7 L619.8 266.6 Z" fill="#874106" stroke="#ffff00" stroke-width="1.5" stroke-linejoin="round" /><path d="M557.0 247.3 L571.0 251.6 L571.0 272.5 L553.9 267.2 Q553.9 253.9 557.0 247.3 Z" fill="#874106" stroke="#ffff00" stroke-width="1.5" stroke-linejoin="round" /><path d="M1395.4 503.8 L1381.4 499.6 L1381.4 520.5 L1398.5 525.7 Q1398.5 512.4 1395.4 503.8 Z" fill="#874106" stroke="#ffff00" stroke-width="1.5" stroke-linejoin="round" /><path d="M669.6 304.3 L672.8 305.3 L672.8 358.3 L669.6 357.3 Z" fill="#b9bcc0"/><path d="M1282.8 492.0 L1279.6 491.0 L1279.6 544.0 L1282.8 545.0 Z" fill="#b9bcc0"/><path d="M576.3 380.8 L600.0 388.0 L600.0 398.0 L590.5 404.1 L586.0 402.8 L576.3 390.8 Z" fill="#e9e9e9" stroke="#ffff00" stroke-width="1.4"/><path d="M571.5 252.3 L576.0 253.7 L576.0 274.7 L571.5 273.3 Z" fill="#9aa3ad"/><path d="M599.5 261.9 L603.5 263.1 L603.5 283.1 L599.5 281.9 Z" fill="#8f8420"/><path d="M557.6 219.1 Q557.6 215.1 562.0 216.4 L575.5 220.5 L585.4 248.9 L590.5 250.4 L599.5 227.9 L612.0 231.7 Q617.3 233.3 617.3 239.3 L617.3 263.8 L603.9 259.7 L599.2 262.8 L599.2 273.2 L599.2 276.2 L603.9 282.2 L603.9 285.1 L599.2 288.0 L599.2 290.0 L599.2 293.0 L603.9 299.0 L603.9 301.9 L599.2 304.8 L599.2 306.8 L599.2 309.8 L603.9 315.8 L603.9 318.7 L599.2 321.6 L599.2 323.6 L599.2 326.6 L603.9 332.6 L603.9 335.5 L599.2 338.4 L599.2 340.4 L599.2 343.4 L603.9 349.4 L603.9 352.3 L599.2 355.2 L599.2 357.2 L599.2 360.2 L603.9 366.2 L603.9 369.1 L599.2 372.0 L599.2 374.0 L599.2 377.0 L603.9 383.0 L603.9 385.9 L603.5 388.6 L572.3 379.1 L576.4 378.4 L576.4 375.4 L576.4 373.4 L571.9 367.7 L571.9 364.8 L576.4 361.6 L576.4 358.6 L576.4 356.6 L571.9 350.9 L571.9 348.0 L576.4 344.8 L576.4 341.8 L576.4 339.8 L571.9 334.1 L571.9 331.2 L576.4 328.0 L576.4 325.0 L576.4 323.0 L571.9 317.3 L571.9 314.4 L576.4 311.2 L576.4 308.2 L576.4 306.2 L571.9 300.5 L571.9 297.6 L576.4 294.4 L576.4 291.4 L576.4 289.4 L571.9 283.7 L571.9 280.8 L576.4 277.6 L576.4 274.6 L576.4 272.6 L571.9 266.9 L571.9 264.0 L576.4 260.8 L576.4 257.8 L576.4 251.8 L557.6 245.6 Z" fill="#874106" stroke="#ffff00" stroke-width="1.5" stroke-linejoin="round" /><path d="M1376.1 625.5 L1352.4 618.3 L1352.4 628.3 L1361.9 640.2 L1366.4 641.6 L1376.1 635.5 Z" fill="#e9e9e9" stroke="#ffff00" stroke-width="1.4"/><path d="M1380.9 500.0 L1376.4 498.6 L1376.4 519.6 L1380.9 521.0 Z" fill="#8f8420"/><path d="M1352.9 492.4 L1348.9 491.2 L1348.9 511.2 L1352.9 512.4 Z" fill="#9aa3ad"/><path d="M1394.8 475.3 Q1394.8 471.3 1390.4 469.9 L1376.9 465.8 L1367.0 488.0 L1361.9 486.5 L1352.9 458.4 L1340.4 454.6 Q1335.1 453.0 1335.1 459.0 L1335.1 483.5 L1348.5 487.6 L1353.2 493.5 L1353.2 503.9 L1353.2 507.0 L1348.5 510.0 L1348.5 512.9 L1353.2 518.7 L1353.2 520.7 L1353.2 523.8 L1348.5 526.8 L1348.5 529.7 L1353.2 535.5 L1353.2 537.5 L1353.2 540.5 L1348.5 543.6 L1348.5 546.5 L1353.2 552.3 L1353.2 554.3 L1353.2 557.4 L1348.5 560.4 L1348.5 563.3 L1353.2 569.1 L1353.2 571.1 L1353.2 574.2 L1348.5 577.2 L1348.5 580.1 L1353.2 585.9 L1353.2 587.9 L1353.2 591.0 L1348.5 594.0 L1348.5 596.9 L1353.2 602.7 L1353.2 604.7 L1353.2 607.8 L1348.5 610.8 L1348.5 613.7 L1348.9 616.7 L1380.1 626.3 L1376.0 623.1 L1376.0 620.1 L1376.0 618.1 L1380.5 615.1 L1380.5 612.2 L1376.0 606.3 L1376.0 603.3 L1376.0 601.3 L1380.5 598.3 L1380.5 595.4 L1376.0 589.5 L1376.0 586.5 L1376.0 584.5 L1380.5 581.5 L1380.5 578.6 L1376.0 572.7 L1376.0 569.7 L1376.0 567.7 L1380.5 564.7 L1380.5 561.8 L1376.0 555.9 L1376.0 552.9 L1376.0 550.9 L1380.5 547.9 L1380.5 545.0 L1376.0 539.1 L1376.0 536.1 L1376.0 534.1 L1380.5 531.1 L1380.5 528.2 L1376.0 522.3 L1376.0 519.3 L1376.0 517.3 L1380.5 514.3 L1380.5 511.4 L1376.0 505.5 L1376.0 502.5 L1376.0 496.5 L1394.8 501.8 Z" fill="#874106" stroke="#ffff00" stroke-width="1.5" stroke-linejoin="round" /><defs><linearGradient id="gpk_d" x1="0" x2="1" y1="0" y2="0"><stop offset="0" stop-color="#3d5167"/><stop offset="0.55" stop-color="#4a5b6e"/><stop offset="0.8" stop-color="#8a8e92"/><stop offset="1" stop-color="#a0a0a0"/></linearGradient><linearGradient id="gpk4" x1="0" x2="1" y1="0" y2="0"><stop offset="0" stop-color="#b7b9bb"/><stop offset="0.5" stop-color="#d2d3d4"/><stop offset="1" stop-color="#a2a3a5"/></linearGradient><linearGradient id="gpk5" x1="0" x2="1" y1="0" y2="0"><stop offset="0" stop-color="#bcbdbf"/><stop offset="0.5" stop-color="#dcdcdd"/><stop offset="1" stop-color="#c4c5c6"/></linearGradient></defs><path d="M531.1 413.0 L554.0 420.0 L554.0 528.5 L531.1 521.5 Z" fill="#874106"/><path d="M531.6 413.6 L553.5 420.3 L553.5 518.8 C553.5 524.8 550.5 526.9 545.5 525.4 L533.6 521.7 Q531.6 521.1 531.6 519.1 Z" fill="url(#gpk_d)" stroke="#ffff00" stroke-width="1.6" stroke-linejoin="round"/><path d="M542.2 428.2 L552.3 430.2 L552.3 443.2 L542.2 446.2 Z" fill="#8d8a86" opacity="0.75"/><path d="M542.2 450.0 L552.3 452.0 L552.3 465.0 L542.2 468.0 Z" fill="#8d8a86" opacity="0.75"/><path d="M542.2 471.7 L552.3 473.7 L552.3 486.7 L542.2 489.7 Z" fill="#8d8a86" opacity="0.75"/><path d="M542.2 493.4 L552.3 495.4 L552.3 508.4 L542.2 511.4 Z" fill="#8d8a86" opacity="0.75"/><ellipse cx="542.2" cy="437.2" rx="7.1" ry="10.7" fill="#874106" stroke="#ffff00" stroke-width="1.5" transform="rotate(-4 542.2 437.2)"/><ellipse cx="542.2" cy="459.0" rx="7.1" ry="10.7" fill="#874106" stroke="#ffff00" stroke-width="1.5" transform="rotate(-4 542.2 459.0)"/><ellipse cx="542.2" cy="480.7" rx="7.1" ry="10.7" fill="#874106" stroke="#ffff00" stroke-width="1.5" transform="rotate(-4 542.2 480.7)"/><ellipse cx="542.2" cy="502.4" rx="7.1" ry="10.7" fill="#874106" stroke="#ffff00" stroke-width="1.5" transform="rotate(-4 542.2 502.4)"/><path d="M621.3 439.6 L643.7 446.4 L643.7 554.9 L621.3 548.1 Z" fill="#874106"/><path d="M621.8 440.2 L643.2 446.8 L643.2 554.3 L629.8 550.2 C624.8 548.6 621.8 543.7 621.8 536.7 Z" fill="url(#gpk5)" stroke="#ffff00" stroke-width="1.6" stroke-linejoin="round"/><path d="M632.7 467.1 L642.0 469.1 L642.0 482.1 L632.7 485.1 Z" fill="#8d8a86" opacity="0.75"/><path d="M632.7 488.8 L642.0 490.8 L642.0 503.8 L632.7 506.8 Z" fill="#8d8a86" opacity="0.75"/><path d="M632.7 510.7 L642.0 512.7 L642.0 525.7 L632.7 528.7 Z" fill="#8d8a86" opacity="0.75"/><ellipse cx="634.7" cy="454.6" rx="6.2" ry="8.6" fill="#a09c98"/><ellipse cx="633.0" cy="454.1" rx="6.2" ry="8.6" fill="#716d6a" stroke="#2a2a2a" stroke-width="0.7" transform="rotate(-6 632.7 454.1)"/><ellipse cx="632.7" cy="476.1" rx="7.1" ry="10.7" fill="#874106" stroke="#ffff00" stroke-width="1.5" transform="rotate(-4 632.7 476.1)"/><ellipse cx="632.7" cy="497.8" rx="7.1" ry="10.7" fill="#874106" stroke="#ffff00" stroke-width="1.5" transform="rotate(-4 632.7 497.8)"/><ellipse cx="632.7" cy="519.7" rx="7.1" ry="10.7" fill="#874106" stroke="#ffff00" stroke-width="1.5" transform="rotate(-4 632.7 519.7)"/><ellipse cx="634.7" cy="541.2" rx="6.2" ry="8.6" fill="#a09c98"/><ellipse cx="633.0" cy="540.7" rx="6.2" ry="8.6" fill="#716d6a" stroke="#2a2a2a" stroke-width="0.7" transform="rotate(-6 632.7 540.7)"/><path d="M1308.7 649.9 L1331.1 656.8 L1331.1 765.8 L1308.7 758.9 Z" fill="#874106"/><path d="M1309.2 650.6 L1330.6 657.1 L1330.6 756.1 C1330.6 762.1 1327.6 764.2 1322.6 762.7 L1311.2 759.2 Q1309.2 758.6 1309.2 756.6 Z" fill="url(#gpk4)" stroke="#ffff00" stroke-width="1.6" stroke-linejoin="round"/><path d="M1319.6 666.3 L1329.4 668.3 L1329.4 681.3 L1319.6 684.3 Z" fill="#8d8a86" opacity="0.75"/><path d="M1319.6 688.1 L1329.4 690.1 L1329.4 703.1 L1319.6 706.1 Z" fill="#8d8a86" opacity="0.75"/><path d="M1319.6 709.8 L1329.4 711.8 L1329.4 724.8 L1319.6 727.8 Z" fill="#8d8a86" opacity="0.75"/><path d="M1319.6 731.5 L1329.4 733.5 L1329.4 746.5 L1319.6 749.5 Z" fill="#8d8a86" opacity="0.75"/><ellipse cx="1319.6" cy="675.3" rx="7.1" ry="10.7" fill="#874106" stroke="#ffff00" stroke-width="1.5" transform="rotate(-4 1319.6 675.3)"/><ellipse cx="1319.6" cy="697.1" rx="7.1" ry="10.7" fill="#874106" stroke="#ffff00" stroke-width="1.5" transform="rotate(-4 1319.6 697.1)"/><ellipse cx="1319.6" cy="718.8" rx="7.1" ry="10.7" fill="#874106" stroke="#ffff00" stroke-width="1.5" transform="rotate(-4 1319.6 718.8)"/><ellipse cx="1319.6" cy="740.5" rx="7.1" ry="10.7" fill="#874106" stroke="#ffff00" stroke-width="1.5" transform="rotate(-4 1319.6 740.5)"/><path d="M1398.4 677.9 L1421.3 684.9 L1421.3 793.4 L1398.4 786.4 Z" fill="#874106"/><path d="M1398.9 678.5 L1420.8 685.2 L1420.8 792.7 L1406.9 788.5 C1401.9 786.9 1398.9 782.0 1398.9 775.0 Z" fill="url(#gpk5)" stroke="#ffff00" stroke-width="1.6" stroke-linejoin="round"/><path d="M1410.1 705.2 L1419.6 707.2 L1419.6 720.2 L1410.1 723.2 Z" fill="#8d8a86" opacity="0.75"/><path d="M1410.1 726.9 L1419.6 728.9 L1419.6 741.9 L1410.1 744.9 Z" fill="#8d8a86" opacity="0.75"/><path d="M1410.1 748.8 L1419.6 750.8 L1419.6 763.8 L1410.1 766.8 Z" fill="#8d8a86" opacity="0.75"/><ellipse cx="1412.1" cy="692.7" rx="6.2" ry="8.6" fill="#a09c98"/><ellipse cx="1410.4" cy="692.2" rx="6.2" ry="8.6" fill="#716d6a" stroke="#2a2a2a" stroke-width="0.7" transform="rotate(-6 1410.1 692.2)"/><ellipse cx="1410.1" cy="714.2" rx="7.1" ry="10.7" fill="#874106" stroke="#ffff00" stroke-width="1.5" transform="rotate(-4 1410.1 714.2)"/><ellipse cx="1410.1" cy="735.9" rx="7.1" ry="10.7" fill="#874106" stroke="#ffff00" stroke-width="1.5" transform="rotate(-4 1410.1 735.9)"/><ellipse cx="1410.1" cy="757.8" rx="7.1" ry="10.7" fill="#874106" stroke="#ffff00" stroke-width="1.5" transform="rotate(-4 1410.1 757.8)"/><ellipse cx="1412.1" cy="779.3" rx="6.2" ry="8.6" fill="#a09c98"/><ellipse cx="1410.4" cy="778.8" rx="6.2" ry="8.6" fill="#716d6a" stroke="#2a2a2a" stroke-width="0.7" transform="rotate(-6 1410.1 778.8)"/></svg>
</body></html>
